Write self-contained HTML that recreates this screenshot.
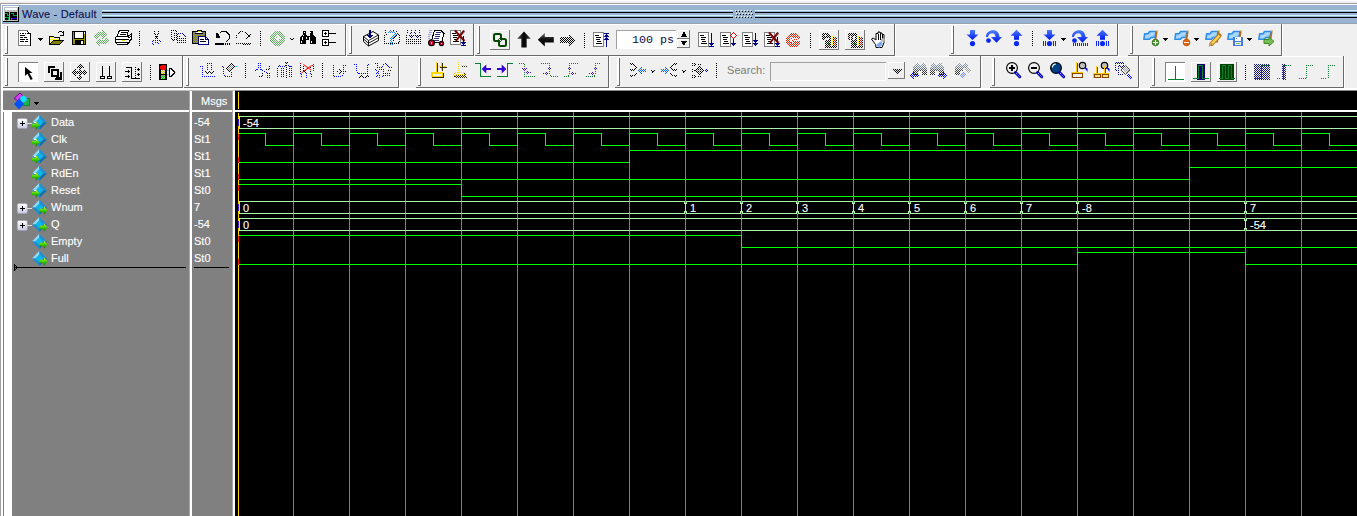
<!DOCTYPE html>
<html><head><meta charset="utf-8"><title>Wave - Default</title>
<style>
html,body{margin:0;padding:0}
body{width:1357px;height:516px;overflow:hidden;background:#f0f0f0;position:relative;font-family:"Liberation Sans",sans-serif}
#r{position:absolute;left:0;top:0;width:1357px;height:516px;overflow:hidden}
#r>div{position:absolute}
.t{font-size:11px;line-height:13px;white-space:nowrap}
.w{color:#fff;-webkit-text-stroke:.12px #fff}
.m{font-family:"Liberation Mono",monospace;white-space:pre}
svg{position:absolute;left:0;top:0}
</style></head>
<body><div id="r">
<div style="left:0px;top:0px;width:1357px;height:3px;background:linear-gradient(#fff,#e9e9e9);"></div>
<div style="left:0px;top:3px;width:1357px;height:1px;background:#a0a0a0;"></div>
<div style="left:0px;top:4px;width:1px;height:512px;background:#a0a0a0;"></div>
<div style="left:1px;top:4px;width:1356px;height:1px;background:#fff;"></div>
<div style="left:1px;top:5px;width:2px;height:511px;background:#fff;"></div>
<div style="left:2px;top:5px;width:1355px;height:18px;background:#99b4d1;"></div>
<div style="left:2px;top:23px;width:1355px;height:1px;background:#98a2ae;"></div>
<div style="left:2px;top:24px;width:1281px;height:1px;background:#fff;"></div>
<div style="left:102px;top:10px;width:631px;height:1px;background:#d0f4ff;"></div>
<div style="left:102px;top:12px;width:631px;height:1px;background:#000;"></div>
<div style="left:755px;top:10px;width:602px;height:1px;background:#d0f4ff;"></div>
<div style="left:755px;top:12px;width:602px;height:1px;background:#000;"></div>
<div style="left:102px;top:15px;width:631px;height:1px;background:#d0f4ff;"></div>
<div style="left:102px;top:17px;width:631px;height:1px;background:#000;"></div>
<div style="left:755px;top:15px;width:602px;height:1px;background:#d0f4ff;"></div>
<div style="left:755px;top:17px;width:602px;height:1px;background:#000;"></div>
<div style="left:2px;top:56px;width:1341px;height:1px;background:#fff;"></div>
<div style="left:2px;top:88px;width:1355px;height:1px;background:#fff;"></div>
<div style="left:2px;top:89px;width:1355px;height:1px;background:#fff;"></div>
<div style="left:3px;top:90px;width:232px;height:1px;background:#c0c0c0;"></div>
<div style="left:235px;top:90px;width:1122px;height:1px;background:#8a8a8a;"></div>
<div style="left:3px;top:91px;width:186px;height:425px;background:#808080;"></div>
<div style="left:189px;top:91px;width:1px;height:425px;background:#a8a8a8;"></div>
<div style="left:190px;top:91px;width:2px;height:425px;background:#fff;"></div>
<div style="left:192px;top:91px;width:40px;height:425px;background:#808080;"></div>
<div style="left:232px;top:91px;width:1px;height:425px;background:#a8a8a8;"></div>
<div style="left:233px;top:91px;width:2px;height:425px;background:#fff;"></div>
<div style="left:235px;top:91px;width:1122px;height:425px;background:#000;"></div>
<div style="left:3px;top:110px;width:186px;height:2px;background:#fff;"></div>
<div style="left:192px;top:110px;width:40px;height:2px;background:#fff;"></div>
<div style="left:235px;top:110px;width:1122px;height:2px;background:#fff;"></div>
<div style="left:4px;top:110px;width:8px;height:406px;background:#fff;"></div>
<svg width="1357" height="516" viewBox="0 0 1357 516" shape-rendering="crispEdges">
<rect x="736" y="11" width="1" height="1" fill="#000" />
<rect x="735" y="10" width="1" height="1" fill="#fff" />
<rect x="739" y="11" width="1" height="1" fill="#000" />
<rect x="738" y="10" width="1" height="1" fill="#fff" />
<rect x="742" y="11" width="1" height="1" fill="#000" />
<rect x="741" y="10" width="1" height="1" fill="#fff" />
<rect x="745" y="11" width="1" height="1" fill="#000" />
<rect x="744" y="10" width="1" height="1" fill="#fff" />
<rect x="748" y="11" width="1" height="1" fill="#000" />
<rect x="747" y="10" width="1" height="1" fill="#fff" />
<rect x="751" y="11" width="1" height="1" fill="#000" />
<rect x="750" y="10" width="1" height="1" fill="#fff" />
<rect x="737" y="14" width="1" height="1" fill="#000" />
<rect x="736" y="13" width="1" height="1" fill="#fff" />
<rect x="740" y="14" width="1" height="1" fill="#000" />
<rect x="739" y="13" width="1" height="1" fill="#fff" />
<rect x="743" y="14" width="1" height="1" fill="#000" />
<rect x="742" y="13" width="1" height="1" fill="#fff" />
<rect x="746" y="14" width="1" height="1" fill="#000" />
<rect x="745" y="13" width="1" height="1" fill="#fff" />
<rect x="749" y="14" width="1" height="1" fill="#000" />
<rect x="748" y="13" width="1" height="1" fill="#fff" />
<rect x="752" y="14" width="1" height="1" fill="#000" />
<rect x="751" y="13" width="1" height="1" fill="#fff" />
<rect x="736" y="17" width="1" height="1" fill="#000" />
<rect x="735" y="16" width="1" height="1" fill="#fff" />
<rect x="739" y="17" width="1" height="1" fill="#000" />
<rect x="738" y="16" width="1" height="1" fill="#fff" />
<rect x="742" y="17" width="1" height="1" fill="#000" />
<rect x="741" y="16" width="1" height="1" fill="#fff" />
<rect x="745" y="17" width="1" height="1" fill="#000" />
<rect x="744" y="16" width="1" height="1" fill="#fff" />
<rect x="748" y="17" width="1" height="1" fill="#000" />
<rect x="747" y="16" width="1" height="1" fill="#fff" />
<rect x="751" y="17" width="1" height="1" fill="#000" />
<rect x="750" y="16" width="1" height="1" fill="#fff" />
<rect x="7" y="26" width="1" height="28" fill="#696969" />
<rect x="5" y="53" width="3" height="1" fill="#696969" />
<rect x="5" y="26" width="2" height="27" fill="#fff" />
<rect x="3" y="55" width="343" height="1" fill="#696969" />
<rect x="345" y="24" width="1" height="32" fill="#696969" />
<rect x="346" y="24" width="1" height="32" fill="#fff" />
<rect x="351" y="26" width="1" height="28" fill="#696969" />
<rect x="349" y="53" width="3" height="1" fill="#696969" />
<rect x="349" y="26" width="2" height="27" fill="#fff" />
<rect x="347" y="55" width="127" height="1" fill="#696969" />
<rect x="473" y="24" width="1" height="32" fill="#696969" />
<rect x="474" y="24" width="1" height="32" fill="#fff" />
<rect x="479" y="26" width="1" height="28" fill="#696969" />
<rect x="477" y="53" width="3" height="1" fill="#696969" />
<rect x="477" y="26" width="2" height="27" fill="#fff" />
<rect x="475" y="55" width="420" height="1" fill="#696969" />
<rect x="894" y="24" width="1" height="32" fill="#696969" />
<rect x="895" y="24" width="1" height="32" fill="#fff" />
<rect x="953" y="26" width="1" height="28" fill="#696969" />
<rect x="951" y="53" width="3" height="1" fill="#696969" />
<rect x="951" y="26" width="2" height="27" fill="#fff" />
<rect x="949" y="55" width="169" height="1" fill="#696969" />
<rect x="1117" y="24" width="1" height="32" fill="#696969" />
<rect x="1118" y="24" width="1" height="32" fill="#fff" />
<rect x="1132" y="26" width="1" height="28" fill="#696969" />
<rect x="1130" y="53" width="3" height="1" fill="#696969" />
<rect x="1130" y="26" width="2" height="27" fill="#fff" />
<rect x="1128" y="55" width="154" height="1" fill="#696969" />
<rect x="1281" y="24" width="1" height="32" fill="#696969" />
<rect x="1282" y="24" width="1" height="32" fill="#fff" />
<rect x="7" y="58" width="1" height="28" fill="#696969" />
<rect x="5" y="85" width="3" height="1" fill="#696969" />
<rect x="5" y="58" width="2" height="27" fill="#fff" />
<rect x="3" y="87" width="180" height="1" fill="#696969" />
<rect x="182" y="56" width="1" height="32" fill="#696969" />
<rect x="183" y="56" width="1" height="32" fill="#fff" />
<rect x="188" y="58" width="1" height="28" fill="#696969" />
<rect x="186" y="85" width="3" height="1" fill="#696969" />
<rect x="186" y="58" width="2" height="27" fill="#fff" />
<rect x="184" y="87" width="215" height="1" fill="#696969" />
<rect x="398" y="56" width="1" height="32" fill="#696969" />
<rect x="399" y="56" width="1" height="32" fill="#fff" />
<rect x="420" y="58" width="1" height="28" fill="#696969" />
<rect x="418" y="85" width="3" height="1" fill="#696969" />
<rect x="418" y="58" width="2" height="27" fill="#fff" />
<rect x="416" y="87" width="193" height="1" fill="#696969" />
<rect x="608" y="56" width="1" height="32" fill="#696969" />
<rect x="609" y="56" width="1" height="32" fill="#fff" />
<rect x="619" y="58" width="1" height="28" fill="#696969" />
<rect x="617" y="85" width="3" height="1" fill="#696969" />
<rect x="617" y="58" width="2" height="27" fill="#fff" />
<rect x="615" y="87" width="366" height="1" fill="#696969" />
<rect x="980" y="56" width="1" height="32" fill="#696969" />
<rect x="981" y="56" width="1" height="32" fill="#fff" />
<rect x="994" y="58" width="1" height="28" fill="#696969" />
<rect x="992" y="85" width="3" height="1" fill="#696969" />
<rect x="992" y="58" width="2" height="27" fill="#fff" />
<rect x="990" y="87" width="149" height="1" fill="#696969" />
<rect x="1138" y="56" width="1" height="32" fill="#696969" />
<rect x="1139" y="56" width="1" height="32" fill="#fff" />
<rect x="1154" y="58" width="1" height="28" fill="#696969" />
<rect x="1152" y="85" width="3" height="1" fill="#696969" />
<rect x="1152" y="58" width="2" height="27" fill="#fff" />
<rect x="1150" y="87" width="194" height="1" fill="#696969" />
<rect x="1343" y="56" width="1" height="32" fill="#696969" />
<rect x="1344" y="56" width="1" height="32" fill="#fff" />
<rect x="490" y="30" width="20" height="1" fill="#fff" />
<rect x="490" y="30" width="1" height="20" fill="#fff" />
<rect x="490" y="49" width="20" height="1" fill="#787878" />
<rect x="509" y="30" width="1" height="20" fill="#787878" />
<rect x="819" y="30" width="20" height="1" fill="#fff" />
<rect x="819" y="30" width="1" height="20" fill="#fff" />
<rect x="819" y="49" width="20" height="1" fill="#787878" />
<rect x="838" y="30" width="1" height="20" fill="#787878" />
<rect x="845" y="30" width="20" height="1" fill="#fff" />
<rect x="845" y="30" width="1" height="20" fill="#fff" />
<rect x="845" y="49" width="20" height="1" fill="#787878" />
<rect x="864" y="30" width="1" height="20" fill="#787878" />
<rect x="18" y="62" width="20" height="20" fill="#fff" />
<rect x="18" y="62" width="20" height="1" fill="#808080" />
<rect x="18" y="62" width="1" height="20" fill="#808080" />
<rect x="44" y="62" width="20" height="1" fill="#fff" />
<rect x="44" y="62" width="1" height="20" fill="#fff" />
<rect x="44" y="81" width="20" height="1" fill="#787878" />
<rect x="63" y="62" width="1" height="20" fill="#787878" />
<rect x="70" y="62" width="20" height="1" fill="#fff" />
<rect x="70" y="62" width="1" height="20" fill="#fff" />
<rect x="70" y="81" width="20" height="1" fill="#787878" />
<rect x="89" y="62" width="1" height="20" fill="#787878" />
<rect x="96" y="62" width="20" height="1" fill="#fff" />
<rect x="96" y="62" width="1" height="20" fill="#fff" />
<rect x="96" y="81" width="20" height="1" fill="#787878" />
<rect x="115" y="62" width="1" height="20" fill="#787878" />
<rect x="122" y="62" width="20" height="1" fill="#fff" />
<rect x="122" y="62" width="1" height="20" fill="#fff" />
<rect x="122" y="81" width="20" height="1" fill="#787878" />
<rect x="141" y="62" width="1" height="20" fill="#787878" />
<rect x="1165" y="62" width="20" height="20" fill="#fff" />
<rect x="1165" y="62" width="20" height="1" fill="#808080" />
<rect x="1165" y="62" width="1" height="20" fill="#808080" />
<rect x="1191" y="62" width="20" height="1" fill="#fff" />
<rect x="1191" y="62" width="1" height="20" fill="#fff" />
<rect x="1191" y="81" width="20" height="1" fill="#787878" />
<rect x="1210" y="62" width="1" height="20" fill="#787878" />
<rect x="1217" y="62" width="20" height="1" fill="#fff" />
<rect x="1217" y="62" width="1" height="20" fill="#fff" />
<rect x="1217" y="81" width="20" height="1" fill="#787878" />
<rect x="1236" y="62" width="1" height="20" fill="#787878" />
<path d="M139.5 31V46" stroke="#000" stroke-width="1" stroke-dasharray="1 1" fill="none"/>
<path d="M260.5 31V46" stroke="#000" stroke-width="1" stroke-dasharray="1 1" fill="none"/>
<path d="M584.5 33V48" stroke="#000" stroke-width="1" stroke-dasharray="1 1" fill="none"/>
<path d="M810.5 33V48" stroke="#000" stroke-width="1" stroke-dasharray="1 1" fill="none"/>
<path d="M1032.5 31V46" stroke="#000" stroke-width="1" stroke-dasharray="1 1" fill="none"/>
<path d="M150.5 65V80" stroke="#000" stroke-width="1" stroke-dasharray="1 1" fill="none"/>
<path d="M245.5 63V78" stroke="#000" stroke-width="1" stroke-dasharray="1 1" fill="none"/>
<path d="M322.5 63V78" stroke="#000" stroke-width="1" stroke-dasharray="1 1" fill="none"/>
<path d="M716.5 63V78" stroke="#000" stroke-width="1" stroke-dasharray="1 1" fill="none"/>
<path d="M1245.5 65V80" stroke="#000" stroke-width="1" stroke-dasharray="1 1" fill="none"/>
<rect x="616" y="30" width="60" height="19" fill="#fff" />
<rect x="616" y="30" width="60" height="1" fill="#a0a0a0" />
<rect x="616" y="30" width="1" height="19" fill="#a0a0a0" />
<rect x="677" y="30" width="13" height="1" fill="#fff" />
<rect x="677" y="30" width="1" height="9" fill="#fff" />
<rect x="677" y="38" width="13" height="1" fill="#787878" />
<rect x="689" y="30" width="1" height="9" fill="#787878" />
<rect x="677" y="39" width="13" height="1" fill="#fff" />
<rect x="677" y="39" width="1" height="9" fill="#fff" />
<rect x="677" y="47" width="13" height="1" fill="#787878" />
<rect x="689" y="39" width="1" height="9" fill="#787878" />
<path d="M681 36.500h6l-3-5zM681 41h6l-3 5z" fill="#000"/>
<rect x="770" y="62" width="116" height="1" fill="#a0a0a0" />
<rect x="770" y="62" width="1" height="19" fill="#a0a0a0" />
<rect x="771" y="80" width="115" height="1" fill="#fff" />
<rect x="885" y="63" width="1" height="18" fill="#fff" />
<rect x="888" y="62" width="17" height="1" fill="#fff" />
<rect x="888" y="62" width="1" height="17" fill="#fff" />
<rect x="888" y="78" width="17" height="1" fill="#787878" />
<rect x="904" y="62" width="1" height="17" fill="#787878" />
<rect x="14" y="267" width="172" height="1" fill="#000" />
<rect x="194" y="267" width="35" height="1" fill="#000" />
<path d="M14.5 264.5v6l3-3z" fill="none" stroke="#000"/>
<rect x="293" y="112" width="1" height="404" fill="#7f7f7f" />
<rect x="349" y="112" width="1" height="404" fill="#7f7f7f" />
<rect x="405" y="112" width="1" height="404" fill="#7f7f7f" />
<rect x="461" y="112" width="1" height="404" fill="#7f7f7f" />
<rect x="517" y="112" width="1" height="404" fill="#7f7f7f" />
<rect x="573" y="112" width="1" height="404" fill="#7f7f7f" />
<rect x="629" y="112" width="1" height="404" fill="#7f7f7f" />
<rect x="685" y="112" width="1" height="404" fill="#7f7f7f" />
<rect x="741" y="112" width="1" height="404" fill="#7f7f7f" />
<rect x="797" y="112" width="1" height="404" fill="#7f7f7f" />
<rect x="853" y="112" width="1" height="404" fill="#7f7f7f" />
<rect x="909" y="112" width="1" height="404" fill="#7f7f7f" />
<rect x="965" y="112" width="1" height="404" fill="#7f7f7f" />
<rect x="1021" y="112" width="1" height="404" fill="#7f7f7f" />
<rect x="1077" y="112" width="1" height="404" fill="#7f7f7f" />
<rect x="1133" y="112" width="1" height="404" fill="#7f7f7f" />
<rect x="1189" y="112" width="1" height="404" fill="#7f7f7f" />
<rect x="1245" y="112" width="1" height="404" fill="#7f7f7f" />
<rect x="1301" y="112" width="1" height="404" fill="#7f7f7f" />
<path d="M239 133.5H265.5V145.5H293.5V133.5H321.5V145.5H349.5V133.5H377.5V145.5H405.5V133.5H433.5V145.5H461.5V133.5H489.5V145.5H517.5V133.5H545.5V145.5H573.5V133.5H601.5V145.5H629.5V133.5H657.5V145.5H685.5V133.5H713.5V145.5H741.5V133.5H769.5V145.5H797.5V133.5H825.5V145.5H853.5V133.5H881.5V145.5H909.5V133.5H937.5V145.5H965.5V133.5H993.5V145.5H1021.5V133.5H1049.5V145.5H1077.5V133.5H1105.5V145.5H1133.5V133.5H1161.5V145.5H1189.5V133.5H1217.5V145.5H1245.5V133.5H1273.5V145.5H1301.5V133.5H1329.5V145.5H1357" stroke="#00ff00" fill="none" stroke-width="1"/>
<path d="M239 162.5H629.5V150.5H1357" stroke="#00ff00" fill="none" stroke-width="1"/>
<path d="M239 179.5H1189.5V167.5H1357" stroke="#00ff00" fill="none" stroke-width="1"/>
<path d="M239 184.5H461.5V196.5H1357" stroke="#00ff00" fill="none" stroke-width="1"/>
<path d="M239 235.5H741.5V247.5H1357" stroke="#00ff00" fill="none" stroke-width="1"/>
<path d="M239 264.5H1077.5V252.5H1245.5V264.5H1357" stroke="#00ff00" fill="none" stroke-width="1"/>
<rect x="239" y="116" width="1" height="13" fill="#acf4ac" />
<rect x="239" y="116" width="1119" height="1" fill="#acf4ac" />
<rect x="239" y="128" width="1119" height="1" fill="#acf4ac" />
<rect x="238" y="119" width="1" height="7" fill="#3c1ec8" />
<rect x="239" y="201" width="1" height="13" fill="#acf4ac" />
<rect x="239" y="201" width="446" height="1" fill="#acf4ac" />
<rect x="239" y="213" width="446" height="1" fill="#acf4ac" />
<rect x="684" y="202" width="1" height="2" fill="#acf4ac" />
<rect x="684" y="211" width="1" height="2" fill="#acf4ac" />
<rect x="686" y="202" width="1" height="2" fill="#acf4ac" />
<rect x="686" y="211" width="1" height="2" fill="#acf4ac" />
<rect x="685" y="203" width="1" height="9" fill="#acf4ac" />
<rect x="686" y="201" width="55" height="1" fill="#acf4ac" />
<rect x="686" y="213" width="55" height="1" fill="#acf4ac" />
<rect x="740" y="202" width="1" height="2" fill="#acf4ac" />
<rect x="740" y="211" width="1" height="2" fill="#acf4ac" />
<rect x="742" y="202" width="1" height="2" fill="#acf4ac" />
<rect x="742" y="211" width="1" height="2" fill="#acf4ac" />
<rect x="741" y="203" width="1" height="9" fill="#acf4ac" />
<rect x="742" y="201" width="55" height="1" fill="#acf4ac" />
<rect x="742" y="213" width="55" height="1" fill="#acf4ac" />
<rect x="796" y="202" width="1" height="2" fill="#acf4ac" />
<rect x="796" y="211" width="1" height="2" fill="#acf4ac" />
<rect x="798" y="202" width="1" height="2" fill="#acf4ac" />
<rect x="798" y="211" width="1" height="2" fill="#acf4ac" />
<rect x="797" y="203" width="1" height="9" fill="#acf4ac" />
<rect x="798" y="201" width="55" height="1" fill="#acf4ac" />
<rect x="798" y="213" width="55" height="1" fill="#acf4ac" />
<rect x="852" y="202" width="1" height="2" fill="#acf4ac" />
<rect x="852" y="211" width="1" height="2" fill="#acf4ac" />
<rect x="854" y="202" width="1" height="2" fill="#acf4ac" />
<rect x="854" y="211" width="1" height="2" fill="#acf4ac" />
<rect x="853" y="203" width="1" height="9" fill="#acf4ac" />
<rect x="854" y="201" width="55" height="1" fill="#acf4ac" />
<rect x="854" y="213" width="55" height="1" fill="#acf4ac" />
<rect x="908" y="202" width="1" height="2" fill="#acf4ac" />
<rect x="908" y="211" width="1" height="2" fill="#acf4ac" />
<rect x="910" y="202" width="1" height="2" fill="#acf4ac" />
<rect x="910" y="211" width="1" height="2" fill="#acf4ac" />
<rect x="909" y="203" width="1" height="9" fill="#acf4ac" />
<rect x="910" y="201" width="55" height="1" fill="#acf4ac" />
<rect x="910" y="213" width="55" height="1" fill="#acf4ac" />
<rect x="964" y="202" width="1" height="2" fill="#acf4ac" />
<rect x="964" y="211" width="1" height="2" fill="#acf4ac" />
<rect x="966" y="202" width="1" height="2" fill="#acf4ac" />
<rect x="966" y="211" width="1" height="2" fill="#acf4ac" />
<rect x="965" y="203" width="1" height="9" fill="#acf4ac" />
<rect x="966" y="201" width="55" height="1" fill="#acf4ac" />
<rect x="966" y="213" width="55" height="1" fill="#acf4ac" />
<rect x="1020" y="202" width="1" height="2" fill="#acf4ac" />
<rect x="1020" y="211" width="1" height="2" fill="#acf4ac" />
<rect x="1022" y="202" width="1" height="2" fill="#acf4ac" />
<rect x="1022" y="211" width="1" height="2" fill="#acf4ac" />
<rect x="1021" y="203" width="1" height="9" fill="#acf4ac" />
<rect x="1022" y="201" width="55" height="1" fill="#acf4ac" />
<rect x="1022" y="213" width="55" height="1" fill="#acf4ac" />
<rect x="1076" y="202" width="1" height="2" fill="#acf4ac" />
<rect x="1076" y="211" width="1" height="2" fill="#acf4ac" />
<rect x="1078" y="202" width="1" height="2" fill="#acf4ac" />
<rect x="1078" y="211" width="1" height="2" fill="#acf4ac" />
<rect x="1077" y="203" width="1" height="9" fill="#acf4ac" />
<rect x="1078" y="201" width="167" height="1" fill="#acf4ac" />
<rect x="1078" y="213" width="167" height="1" fill="#acf4ac" />
<rect x="1244" y="202" width="1" height="2" fill="#acf4ac" />
<rect x="1244" y="211" width="1" height="2" fill="#acf4ac" />
<rect x="1246" y="202" width="1" height="2" fill="#acf4ac" />
<rect x="1246" y="211" width="1" height="2" fill="#acf4ac" />
<rect x="1245" y="203" width="1" height="9" fill="#acf4ac" />
<rect x="1246" y="201" width="112" height="1" fill="#acf4ac" />
<rect x="1246" y="213" width="112" height="1" fill="#acf4ac" />
<rect x="238" y="204" width="1" height="7" fill="#3c1ec8" />
<rect x="239" y="218" width="1" height="13" fill="#acf4ac" />
<rect x="239" y="218" width="1006" height="1" fill="#acf4ac" />
<rect x="239" y="230" width="1006" height="1" fill="#acf4ac" />
<rect x="1244" y="219" width="1" height="2" fill="#acf4ac" />
<rect x="1244" y="228" width="1" height="2" fill="#acf4ac" />
<rect x="1246" y="219" width="1" height="2" fill="#acf4ac" />
<rect x="1246" y="228" width="1" height="2" fill="#acf4ac" />
<rect x="1245" y="220" width="1" height="9" fill="#acf4ac" />
<rect x="1246" y="218" width="112" height="1" fill="#acf4ac" />
<rect x="1246" y="230" width="112" height="1" fill="#acf4ac" />
<rect x="238" y="221" width="1" height="7" fill="#3c1ec8" />
<rect x="238" y="92" width="1" height="17" fill="#ffd000" />
<rect x="238" y="113" width="1" height="403" fill="#ffd000" />
<rect x="238" y="134" width="1" height="6" fill="#ff2000" />
<rect x="238" y="157" width="1" height="6" fill="#ff2000" />
<rect x="238" y="174" width="1" height="6" fill="#ff2000" />
<rect x="238" y="185" width="1" height="6" fill="#ff2000" />
<rect x="238" y="236" width="1" height="6" fill="#ff2000" />
<rect x="238" y="259" width="1" height="6" fill="#ff2000" />
<rect x="238" y="119" width="1" height="7" fill="#3c1ec8" />
<rect x="238" y="204" width="1" height="7" fill="#3c1ec8" />
<rect x="238" y="221" width="1" height="7" fill="#3c1ec8" />
<defs>
<pattern id="ck" width="2" height="2" patternUnits="userSpaceOnUse"><rect width="2" height="2" fill="#000"/><rect x="0" y="0" width="1" height="1" fill="#fff"/><rect x="1" y="1" width="1" height="1" fill="#fff"/></pattern>
<pattern id="ck2" width="2" height="2" patternUnits="userSpaceOnUse"><rect width="2" height="2" fill="#000"/><rect x="1" y="0" width="1" height="1" fill="#fff"/><rect x="0" y="1" width="1" height="1" fill="#fff"/></pattern>
<pattern id="q4" width="2" height="2" patternUnits="userSpaceOnUse"><rect width="2" height="2" fill="#000"/><rect x="0" y="0" width="1" height="1" fill="#fff"/></pattern>
<mask id="m50" maskUnits="userSpaceOnUse" x="0" y="0" width="1357" height="516"><rect width="1357" height="516" fill="url(#ck)"/></mask>
<mask id="m50b" maskUnits="userSpaceOnUse" x="0" y="0" width="1357" height="516"><rect width="1357" height="516" fill="url(#ck2)"/></mask>
<mask id="m25" maskUnits="userSpaceOnUse" x="0" y="0" width="1357" height="516"><rect width="1357" height="516" fill="url(#q4)"/></mask>
<linearGradient id="gb" x1="0" y1="0" x2="0" y2="1"><stop offset="0" stop-color="#4a7dff"/><stop offset="1" stop-color="#0018e8"/></linearGradient>
<linearGradient id="gk" x1="0" y1="0" x2="1" y2="0"><stop offset="0" stop-color="#555"/><stop offset=".5" stop-color="#000"/><stop offset="1" stop-color="#444"/></linearGradient>
<linearGradient id="gk2" x1="0" y1="0" x2="0" y2="1"><stop offset="0" stop-color="#666"/><stop offset=".45" stop-color="#111"/><stop offset="1" stop-color="#000"/></linearGradient>
<linearGradient id="gfl" x1="0" y1="0" x2="1" y2="1"><stop offset="0" stop-color="#62b0f4"/><stop offset=".5" stop-color="#b4dcfc"/><stop offset="1" stop-color="#58a8f0"/></linearGradient>
<linearGradient id="ggr" x1="0" y1="0" x2="0" y2="1"><stop offset="0" stop-color="#e8ff20"/><stop offset=".5" stop-color="#40d000"/><stop offset="1" stop-color="#0a6000"/></linearGradient>
<linearGradient id="gbn" x1="0" y1="0" x2="0" y2="1"><stop offset="0" stop-color="#9aaabc"/><stop offset=".45" stop-color="#6c7888"/><stop offset=".65" stop-color="#3c3c3c"/><stop offset="1" stop-color="#2a2a2a"/></linearGradient>
<linearGradient id="gpl" x1="0" y1="0" x2="0" y2="1"><stop offset="0" stop-color="#fff"/><stop offset="1" stop-color="#c8c8e0"/></linearGradient>
</defs>
<path d="M18 30h10l3 3v13h-13z" fill="#fff" />
<rect x="18" y="30" width="1" height="16" fill="#808080"/>
<rect x="18" y="30" width="10" height="1" fill="#808080"/>
<rect x="18" y="45" width="13" height="1" fill="#808080"/>
<rect x="30" y="33" width="1" height="13" fill="#000"/>
<rect x="27" y="33" width="4" height="1" fill="#000"/>
<path d="M27 31h1v1h-1zM28 32h1v1h-1zM29 33h1v1h-1z" fill="#000"/>
<rect x="20" y="33" width="1" height="1" fill="#000"/>
<rect x="22" y="33" width="2" height="1" fill="#000"/>
<rect x="25" y="33" width="1" height="1" fill="#000"/>
<rect x="20" y="35" width="5" height="1" fill="#000"/>
<rect x="20" y="37" width="3" height="1" fill="#000"/>
<rect x="24" y="37" width="3" height="1" fill="#000"/>
<rect x="20" y="39" width="5" height="1" fill="#000"/>
<rect x="26" y="39" width="2" height="1" fill="#000"/>
<rect x="20" y="41" width="4" height="1" fill="#000"/>
<rect x="25" y="41" width="3" height="1" fill="#000"/>
<rect x="38" y="38" width="5" height="1" fill="#000"/>
<rect x="39" y="39" width="3" height="1" fill="#000"/>
<rect x="40" y="40" width="1" height="1" fill="#000"/>
<path d="M49.5 36.5v8h10l4-4h-3.5v-3h-6l-1-1z" fill="#fff" />
<path d="M50 37h9v3h-5l-4 4z" fill="#ffff00" />
<path d="M50 37h9v3h-5l-4 4z" fill="#fff" mask="url(#m50)"/>
<path d="M54 40h9l-4 4h-9z" fill="#808000" />
<path d="M49.5 44.5v-8.5h3.5l1 1h5v3M53.5 40.5h10l-4 4h-10l4-4" fill="none" stroke="#000" stroke-width="1" />
<path d="M57.5 33.5l2-2h2l2.5 2.5M63.5 31v4h-3.5" fill="none" stroke="#000" stroke-width="1" />
<rect x="72" y="31" width="14" height="14" fill="#000"/>
<rect x="73" y="32" width="12" height="12" fill="#9a9a00"/>
<rect x="74" y="31" width="10" height="8" fill="#000"/>
<rect x="75" y="32" width="8" height="6" fill="#fff"/>
<rect x="75" y="40" width="9" height="5" fill="#000"/>
<rect x="81" y="41" width="2" height="3" fill="#fff"/>
<rect x="84" y="32" width="1" height="2" fill="#fff"/>
<g mask="url(#m50)">
<path d="M93 36l4-4h5v-2l5 4-5 5v-3h-3l-3 3z" fill="#62b462" />
<path d="M109 40l-4 4h-5v2l-5-4 5-5v3h3l3-3z" fill="#62b462" />
</g>
<path d="M119.5 30.5h9l-1.5 5.5h-10z" fill="#fff" stroke="#000" stroke-width="1" />
<rect x="121" y="32" width="6" height="1" fill="#000"/>
<rect x="120" y="34" width="6" height="1" fill="#000"/>
<path d="M115.5 37.5l1.5-1.5h10.5l1.5 1.5v5l-1.5 1.5h-10.5l-1.5-1.5z" fill="#fff" stroke="#000" stroke-width="1" />
<path d="M128.5 36l2.5-2v6l-2.5 3" fill="#fff" stroke="#000" stroke-width="1" />
<rect x="116" y="39" width="13" height="1" fill="#000"/>
<rect x="116" y="42" width="13" height="1" fill="#000"/>
<rect x="122" y="40" width="3" height="1" fill="#e8e000"/>
<path d="M129 37h1v1h-1zM130 36h1v1h-1zM129 40h1v1h-1zM130 39h1v1h-1z" fill="#000"/>
<path d="M154 31h1v1h-1zM158 31h1v1h-1zM154 33h1v1h-1zM158 33h1v1h-1zM155 34h1v1h-1zM157 34h1v1h-1zM156 36h1v1h-1zM155 36h1v1h-1zM157 36h1v1h-1zM156 37h1v1h-1z" fill="#000"/>
<path d="M155 38h1v1h-1zM157 38h1v1h-1zM153 40h1v1h-1zM155 40h1v1h-1zM157 40h1v1h-1zM152 41h1v1h-1zM160 41h1v1h-1zM155 42h1v1h-1zM157 42h1v1h-1zM152 43h1v1h-1zM158 43h1v1h-1zM153 44h1v1h-1zM159 40h1v1h-1z" fill="#0000ff"/>
<path d="M171 30h1v1h-1zM173 30h1v1h-1zM175 30h1v1h-1zM176 31h1v1h-1zM171 32h1v1h-1zM171 34h1v1h-1zM171 36h1v1h-1zM171 38h1v1h-1zM172 39h1v1h-1zM173 40h1v1h-1zM174 33h1v1h-1zM174 35h1v1h-1zM174 37h1v1h-1zM174 39h1v1h-1zM176 33h1v1h-1zM176 35h1v1h-1zM176 37h1v1h-1zM176 39h1v1h-1zM179 36h1v1h-1zM179 38h1v1h-1zM181 38h1v1h-1zM183 38h1v1h-1zM179 40h1v1h-1zM181 40h1v1h-1zM183 40h1v1h-1z" fill="#000"/>
<path d="M178 33h1v1h-1zM180 33h1v1h-1zM182 33h1v1h-1zM183 34h1v1h-1zM184 35h1v1h-1zM185 36h1v1h-1zM177 34h1v1h-1zM177 36h1v1h-1zM177 38h1v1h-1zM177 40h1v1h-1zM177 42h1v1h-1zM185 38h1v1h-1zM185 40h1v1h-1zM185 42h1v1h-1zM179 42h1v1h-1zM181 42h1v1h-1zM183 42h1v1h-1z" fill="#000090"/>
<rect x="192" y="31" width="14" height="13" fill="#000"/>
<rect x="193" y="32" width="12" height="11" fill="#808000"/>
<rect x="193" y="32" width="12" height="11" fill="#909090" mask="url(#m50)"/>
<path d="M195 33.5l1.5-1.5h5l1.5 1.5z" fill="#fff" />
<rect x="195" y="33" width="8" height="1" fill="#000"/>
<rect x="198" y="31" width="3" height="1" fill="#e8e000"/>
<rect x="199" y="30" width="1" height="1" fill="#000"/>
<rect x="197" y="30" width="5" height="1" fill="#000"/>
<path d="M198.5 36.5h7l2.5 2.5v5h-9.5z" fill="#fff" stroke="#000080" stroke-width="1" />
<path d="M205.5 36.5v2.5h2.5" fill="none" stroke="#000080" stroke-width="1" />
<rect x="200" y="39" width="4" height="1" fill="#000"/>
<rect x="200" y="41" width="6" height="1" fill="#000"/>
<path d="M216 33v5h4v-1z" fill="#000" />
<path d="M217 33h1v1h-1zM218 34h1v1h-1z" fill="#000"/>
<path d="M219.5 33.5l2-2h4.5l3.5 3.5v3.500l-3.500 3.500" fill="none" stroke="#000" stroke-width="1" />
<rect x="215" y="43" width="9" height="2" fill="#000"/>
<rect x="225" y="43" width="1" height="2" fill="#000"/>
<rect x="227" y="43" width="1" height="2" fill="#000"/>
<rect x="229" y="43" width="1" height="2" fill="#000"/>
<path d="M236 35h1v1h-1zM236 37h1v1h-1zM238 33h1v1h-1zM239 32h1v1h-1zM240 31h1v1h-1zM242 31h1v1h-1zM245 32h1v1h-1zM246 33h1v1h-1zM247 34h1v1h-1zM248 35h1v1h-1zM249 36h1v1h-1zM250 34h1v1h-1zM249 35h1v1h-1zM247 37h1v1h-1zM246 38h1v1h-1zM248 36h1v1h-1zM236 43h1v1h-1zM238 43h1v1h-1zM240 43h1v1h-1zM242 43h1v1h-1zM243 44h1v1h-1zM244 43h1v1h-1zM245 44h1v1h-1zM246 43h1v1h-1zM247 44h1v1h-1zM248 43h1v1h-1zM249 44h1v1h-1zM250 43h1v1h-1z" fill="#000"/>
<g mask="url(#m50)">
<circle cx="277.5" cy="38.500" r="7.5" fill="#62b462"/>
</g>
<path d="M277.5 34.5l3.5 3.5-3.500 3.500-3.500-3.500z" fill="#f4f4f4" />
<path d="M276 37h1v1h-1zM279 39h1v1h-1z" fill="#62b462"/>
<path d="M290 38h1v1h-1zM291 39h1v1h-1zM292 39h1v1h-1zM293 38h1v1h-1z" fill="#000"/>
<path d="M303 31h3v3l1 2h2l1-2v-3h3v3l3 4v6h-6v-4h-4v4h-6v-6l3-4z" fill="#000" />
<path d="M304 32h1v1h-1zM310 32h1v1h-1zM303 35h1v1h-1zM309 35h1v1h-1zM302 37h1v1h-1zM302 38h1v1h-1zM302 39h1v1h-1zM306 37h1v1h-1zM306 38h1v1h-1zM309 37h1v1h-1zM309 38h1v1h-1zM309 39h1v1h-1zM301 41h1v1h-1zM301 42h1v1h-1zM311 41h1v1h-1zM311 42h1v1h-1z" fill="#fff"/>
<rect x="322" y="30" width="7" height="7" fill="#000"/>
<rect x="323" y="31" width="5" height="5" fill="#fff"/>
<rect x="324" y="33" width="3" height="1" fill="#000"/>
<rect x="325" y="32" width="1" height="3" fill="#000"/>
<rect x="329" y="33" width="7" height="1" fill="#000"/>
<rect x="322" y="39" width="7" height="7" fill="#000"/>
<rect x="323" y="40" width="5" height="5" fill="#fff"/>
<rect x="324" y="42" width="3" height="1" fill="#000"/>
<rect x="325" y="41" width="1" height="3" fill="#000"/>
<rect x="329" y="42" width="7" height="1" fill="#000"/>
<path d="M363.5 36.500L373 31.500l5.500 3.500v5.500L368.500 46l-5-4.500z" fill="#fff" stroke="#000" stroke-width="1" shape-rendering="auto"/>
<path d="M363.500 36.500l5 4 10-5.500M363.500 39l5 4.200 10-5.500M368.500 40.500v5.500" fill="none" stroke="#000" stroke-width="0.9" shape-rendering="auto"/>
<rect x="369" y="30" width="2" height="5" fill="#00007a"/>
<rect x="367" y="35" width="6" height="1" fill="#00007a"/>
<rect x="368" y="36" width="4" height="1" fill="#00007a"/>
<rect x="369" y="37" width="2" height="1" fill="#00007a"/>
<path d="M384 43h1v1h-1zM386 43h1v1h-1zM388 43h1v1h-1zM390 43h1v1h-1zM392 43h1v1h-1zM394 43h1v1h-1zM396 43h1v1h-1zM398 43h1v1h-1zM384 35h1v1h-1zM399 35h1v1h-1zM384 37h1v1h-1zM399 37h1v1h-1zM384 39h1v1h-1zM399 39h1v1h-1zM384 41h1v1h-1zM399 41h1v1h-1zM386 34h1v1h-1zM398 34h1v1h-1zM397 33h1v1h-1zM396 35h1v1h-1zM395 36h1v1h-1zM394 37h1v1h-1zM393 38h1v1h-1zM393 40h1v1h-1zM398 42h1v1h-1z" fill="#000"/>
<path d="M385 30h1v1h-1zM385 32h1v1h-1zM393 30h1v1h-1zM396 31h1v1h-1zM397 33h1v1h-1z" fill="#00007a"/>
<g mask="url(#m50)">
<path d="M388 33.500q.5-2 3.500-2q4 0 4 3l-4.500 4.500v2.500" fill="none" stroke="#1e82ff" stroke-width="2.2" />
<rect x="390" y="42" width="3" height="3" fill="#1e82ff"/>
</g>
<path d="M406 39h1v1h-1zM408 39h1v1h-1zM410 39h1v1h-1zM412 39h1v1h-1zM414 39h1v1h-1zM416 39h1v1h-1zM418 39h1v1h-1zM420 39h1v1h-1zM406 41h1v1h-1zM408 41h1v1h-1zM410 41h1v1h-1zM412 41h1v1h-1zM414 41h1v1h-1zM416 41h1v1h-1zM418 41h1v1h-1zM420 41h1v1h-1zM406 43h1v1h-1zM408 43h1v1h-1zM410 43h1v1h-1zM412 43h1v1h-1zM414 43h1v1h-1zM416 43h1v1h-1zM418 43h1v1h-1zM420 43h1v1h-1zM406 35h1v1h-1zM406 37h1v1h-1zM420 35h1v1h-1zM420 37h1v1h-1z" fill="#000"/>
<path d="M407 30h1v1h-1zM407 32h1v1h-1zM411 30h1v1h-1zM415 30h1v1h-1zM419 30h1v1h-1zM419 32h1v1h-1zM411 32h1v1h-1zM410 33h1v1h-1zM414 32h1v1h-1zM415 33h1v1h-1zM409 35h1v1h-1zM410 36h1v1h-1zM411 37h1v1h-1zM412 36h1v1h-1zM413 35h1v1h-1zM415 35h1v1h-1zM416 36h1v1h-1zM417 37h1v1h-1zM418 36h1v1h-1zM419 35h1v1h-1zM411 35h1v1h-1zM417 35h1v1h-1z" fill="#00007a"/>
<path d="M434.5 30.5h6.5l3 3-1 4-1.500 5h-8l-2-2 1.500-5z" fill="#fff" stroke="#000" stroke-width="1" />
<rect x="436" y="32" width="5" height="1" fill="#303070"/>
<rect x="435" y="34" width="5" height="1" fill="#303070"/>
<rect x="435" y="36" width="5" height="1" fill="#303070"/>
<rect x="434" y="38" width="5" height="1" fill="#303070"/>
<rect x="434" y="40" width="5" height="1" fill="#303070"/>
<rect x="429" y="30" width="3" height="1" fill="#9c9cd8"/>
<rect x="429" y="32" width="3" height="1" fill="#9c9cd8"/>
<rect x="428" y="34" width="3" height="1" fill="#9c9cd8"/>
<rect x="428" y="36" width="2" height="1" fill="#9c9cd8"/>
<rect x="428" y="38" width="2" height="1" fill="#9c9cd8"/>
<circle cx="431.5" cy="42.800" r="2.900" fill="#e00030" stroke="#000" stroke-width="1.200" shape-rendering="auto"/>
<circle cx="441.5" cy="43.500" r="2.100" fill="#e00030" stroke="#000" stroke-width="1.100" shape-rendering="auto"/>
<path d="M431 42h1v1h-1zM431 43h1v1h-1zM441 43h1v1h-1z" fill="#ffd0d8"/>
<rect x="450" y="30" width="11" height="15" fill="#808080"/>
<rect x="451" y="31" width="9" height="13" fill="#fff"/>
<rect x="452" y="33" width="4" height="1" fill="#000"/>
<rect x="453" y="35" width="5" height="1" fill="#000"/>
<rect x="453" y="37" width="4" height="1" fill="#000"/>
<rect x="454" y="39" width="4" height="1" fill="#000"/>
<rect x="453" y="41" width="6" height="1" fill="#000"/>
<path d="M464.8 31.2l-4 4.500" fill="none" stroke="#a8a8a8" stroke-width="1.6" shape-rendering="auto"/>
<path d="M455 30.5l9.500 10.500M464 30.5l-8 10.500" fill="none" stroke="#7a0000" stroke-width="2" shape-rendering="auto"/>
<rect x="463" y="36" width="1" height="9" fill="#00008c"/>
<rect x="461" y="42" width="5" height="1" fill="#00008c"/>
<rect x="462" y="43" width="3" height="1" fill="#00008c"/>
<rect x="461" y="45" width="5" height="1" fill="#00008c"/>
<g fill="none" stroke="#004600" stroke-width="2" shape-rendering="auto"><rect x="494" y="34" width="7" height="7" rx="1.5"/><rect x="499" y="39" width="7" height="7" rx="1.500"/></g>
<path d="M498.5 38.5l3 3" fill="none" stroke="#fff" stroke-width="1" shape-rendering="auto"/>
<path d="M524 31.5l6.800 7.300h-4.100v8.700h-5.400v-8.700h-4.100z" fill="url(#gk)" shape-rendering="auto"/>
<path d="M537.8 39.8l7-6.800v4h9v5.600h-9v4z" fill="url(#gk2)" shape-rendering="auto"/>
<g mask="url(#m50)">
<path d="M576 40.500l-7-6.500v3h-9v6h9v4z" fill="#000" />
</g>
<rect x="593" y="32" width="11" height="15" fill="#808080"/>
<rect x="594" y="33" width="9" height="13" fill="#fff"/>
<rect x="595" y="35" width="4" height="1" fill="#000"/>
<rect x="596" y="37" width="5" height="1" fill="#000"/>
<rect x="596" y="39" width="4" height="1" fill="#000"/>
<rect x="597" y="41" width="4" height="1" fill="#000"/>
<rect x="596" y="43" width="6" height="1" fill="#000"/>
<rect x="606" y="33" width="1" height="14" fill="#00008c"/>
<rect x="604" y="33" width="5" height="1" fill="#00008c"/>
<rect x="605" y="35" width="3" height="1" fill="#00008c"/>
<rect x="604" y="36" width="5" height="1" fill="#00008c"/>
<rect x="605" y="38" width="3" height="1" fill="#00008c"/>
<rect x="604" y="39" width="5" height="1" fill="#00008c"/>
<rect x="698" y="32" width="11" height="15" fill="#808080"/>
<rect x="699" y="33" width="9" height="13" fill="#fff"/>
<rect x="700" y="35" width="4" height="1" fill="#000"/>
<rect x="701" y="37" width="5" height="1" fill="#000"/>
<rect x="701" y="39" width="4" height="1" fill="#000"/>
<rect x="702" y="41" width="4" height="1" fill="#000"/>
<rect x="701" y="43" width="6" height="1" fill="#000"/>
<rect x="711" y="33" width="1" height="13" fill="#00008c"/>
<rect x="709" y="43" width="5" height="1" fill="#00008c"/>
<rect x="710" y="44" width="3" height="1" fill="#00008c"/>
<rect x="709" y="46" width="5" height="1" fill="#00008c"/>
<rect x="720" y="32" width="11" height="15" fill="#808080"/>
<rect x="721" y="33" width="9" height="13" fill="#fff"/>
<rect x="722" y="35" width="4" height="1" fill="#000"/>
<rect x="723" y="37" width="5" height="1" fill="#000"/>
<rect x="723" y="39" width="4" height="1" fill="#000"/>
<rect x="724" y="41" width="4" height="1" fill="#000"/>
<rect x="723" y="43" width="6" height="1" fill="#000"/>
<rect x="733" y="38" width="1" height="8" fill="#00008c"/>
<rect x="731" y="43" width="5" height="1" fill="#00008c"/>
<rect x="732" y="44" width="3" height="1" fill="#00008c"/>
<path d="M733.5 32.500l3 3-3 3-3-3z" fill="#fff" stroke="#f00000" stroke-width="1" />
<rect x="742" y="32" width="11" height="15" fill="#808080"/>
<rect x="743" y="33" width="9" height="13" fill="#fff"/>
<rect x="744" y="35" width="4" height="1" fill="#000"/>
<rect x="745" y="37" width="5" height="1" fill="#000"/>
<rect x="745" y="39" width="4" height="1" fill="#000"/>
<rect x="746" y="41" width="4" height="1" fill="#000"/>
<rect x="745" y="43" width="6" height="1" fill="#000"/>
<rect x="755" y="33" width="1" height="13" fill="#00008c"/>
<rect x="753" y="40" width="5" height="1" fill="#00008c"/>
<rect x="754" y="41" width="3" height="1" fill="#00008c"/>
<rect x="753" y="43" width="5" height="1" fill="#00008c"/>
<rect x="754" y="44" width="3" height="1" fill="#00008c"/>
<rect x="764" y="32" width="11" height="15" fill="#808080"/>
<rect x="765" y="33" width="9" height="13" fill="#fff"/>
<rect x="766" y="35" width="4" height="1" fill="#000"/>
<rect x="767" y="37" width="5" height="1" fill="#000"/>
<rect x="767" y="39" width="4" height="1" fill="#000"/>
<rect x="768" y="41" width="4" height="1" fill="#000"/>
<rect x="767" y="43" width="6" height="1" fill="#000"/>
<rect x="777" y="37" width="1" height="9" fill="#00008c"/>
<rect x="775" y="43" width="5" height="1" fill="#00008c"/>
<rect x="776" y="44" width="3" height="1" fill="#00008c"/>
<rect x="775" y="46" width="5" height="1" fill="#00008c"/>
<path d="M778.8 33.2l-4 4.500" fill="none" stroke="#a8a8a8" stroke-width="1.6" shape-rendering="auto"/>
<path d="M769 32.5l9.500 10.500M778 32.5l-8 10.500" fill="none" stroke="#7a0000" stroke-width="2" shape-rendering="auto"/>
<g mask="url(#m50)">
<path d="M790 33h6l4 4v6l-4 4h-6l-4-4v-6z" fill="#e62000" />
</g>
<rect x="790" y="38" width="7" height="4" fill="#f0f0f0"/>
<rect x="797" y="39" width="3" height="2" fill="#f0f0f0"/>
<rect x="791" y="37" width="2" height="6" fill="#f0f0f0"/>
<path d="M791 38h1v1h-1zM792 40h1v1h-1zM791 42h1v1h-1zM794 39h1v1h-1zM796 39h1v1h-1zM793 41h1v1h-1zM795 41h1v1h-1z" fill="#e62000"/>
<g mask="url(#m50)">
<rect x="825" y="40" width="12" height="8" fill="#000"/>
<path d="M829 40v-6l8 4v2z" fill="#000" />
<rect x="831" y="35" width="2" height="11" fill="#ffff00"/>
<rect x="834" y="37" width="2" height="9" fill="#ff0000"/>
</g>
<path d="M828 43h1v1h-1zM829 44h1v1h-1z" fill="#00e000"/>
<g mask="url(#m50)">
<rect x="851" y="40" width="12" height="8" fill="#000"/>
<path d="M855 40v-6l8 4v2z" fill="#000" />
<rect x="857" y="35" width="2" height="11" fill="#ffff00"/>
<rect x="860" y="37" width="2" height="9" fill="#ff0000"/>
</g>
<path d="M854 43h1v1h-1zM855 44h1v1h-1z" fill="#00e000"/>
<g mask="url(#m50)">
<path d="M822 33h7v5h-4v2h-3z" fill="#000" />
<path d="M848 33h9v7h-2v-4h-2v4h-2v-4h-1v4h-2z" fill="#000" />
</g>
<rect x="825" y="35" width="1" height="1" fill="#f0f0f0"/>
<path d="M875.5 44.500l-4-5.500 1.500-1 3 2v-6.500h2v-1.500h2v1h2v1.500h2v8l-2 5h-6z" fill="#fff" stroke="#000" stroke-width="1" shape-rendering="auto"/>
<rect x="878" y="34" width="1" height="6" fill="#000"/>
<rect x="880" y="33" width="1" height="7" fill="#000"/>
<rect x="882" y="35" width="1" height="5" fill="#000"/>
<path d="M876 45l5-4 2 3-4 4z" fill="#7fa8ea" shape-rendering="auto"/>
<circle cx="883" cy="40" r="2" fill="#b4b4b4" shape-rendering="auto"/>
<path d="M970 30h5v4.500h3.500l-6 5.500-6-5.500h3.500z" fill="url(#gb)" shape-rendering="auto"/>
<circle cx="972.5" cy="43.6" r="2.6" fill="#0a28f0" shape-rendering="auto"/>
<path d="M986 37C986 32.500 989.5 30.300 993 30.300C997 30.300 999.2 33 999.5 37H1002L996.5 42.700L991 37H995.5C995.3 35 994.2 33.300 992.5 33.300C990 33.300 988.3 35 988 37z" fill="url(#gb)" shape-rendering="auto"/>
<circle cx="988.5" cy="40.6" r="2.4" fill="#0a28f0" shape-rendering="auto"/>
<path d="M1016.5 29.800l6 6h-3.500v4h-5v-4h-3.500z" fill="url(#gb)" shape-rendering="auto"/>
<circle cx="1016.5" cy="43.6" r="2.6" fill="#0a28f0" shape-rendering="auto"/>
<path d="M1047 30h5v4.500h3.500l-6 5.500-6-5.500h3.500z" fill="url(#gb)" shape-rendering="auto"/>
<circle cx="1049.5" cy="43.6" r="2.6" fill="#0a28f0" shape-rendering="auto"/>
<rect x="1043" y="41" width="1" height="5" fill="#0a28f0"/>
<rect x="1045" y="41" width="1" height="5" fill="#0a28f0"/>
<rect x="1053" y="41" width="1" height="5" fill="#0a28f0"/>
<rect x="1055" y="41" width="1" height="5" fill="#0a28f0"/>
<rect x="1061" y="38" width="5" height="1" fill="#000"/>
<rect x="1062" y="39" width="3" height="1" fill="#000"/>
<rect x="1063" y="40" width="1" height="1" fill="#000"/>
<path d="M1072 37C1072 32.500 1075.5 30.300 1079 30.300C1083 30.300 1085.2 33 1085.5 37H1088L1082.5 42.700L1077 37H1081.5C1081.3 35 1080.2 33.300 1078.5 33.300C1076 33.300 1074.3 35 1074 37z" fill="url(#gb)" shape-rendering="auto"/>
<circle cx="1074.5" cy="40.6" r="2.4" fill="#0a28f0" shape-rendering="auto"/>
<rect x="1073" y="43" width="1" height="3" fill="#0a28f0"/>
<rect x="1075" y="43" width="1" height="3" fill="#0a28f0"/>
<rect x="1077" y="43" width="1" height="3" fill="#0a28f0"/>
<rect x="1079" y="43" width="1" height="3" fill="#0a28f0"/>
<rect x="1081" y="43" width="1" height="3" fill="#0a28f0"/>
<rect x="1083" y="43" width="1" height="3" fill="#0a28f0"/>
<rect x="1085" y="43" width="1" height="3" fill="#0a28f0"/>
<rect x="1087" y="43" width="1" height="3" fill="#0a28f0"/>
<path d="M1102.5 29.800l6 6h-3.500v4h-5v-4h-3.500z" fill="url(#gb)" shape-rendering="auto"/>
<circle cx="1102.5" cy="43.6" r="2.6" fill="#0a28f0" shape-rendering="auto"/>
<rect x="1096" y="41" width="1" height="5" fill="#0a28f0"/>
<rect x="1098" y="41" width="1" height="5" fill="#0a28f0"/>
<rect x="1106" y="41" width="1" height="5" fill="#0a28f0"/>
<rect x="1108" y="41" width="1" height="5" fill="#0a28f0"/>
<path d="M1143.8 39.300l.9-5.600h3.300l1.600-2.200h6.400l-1 6h-4l-1.500 1.800z" fill="url(#gfl)" stroke="#2c8eea" stroke-width="1.5" shape-rendering="auto" stroke-linejoin="round"/>
<path d="M1156.8 31.200l-1.800 11.500" fill="none" stroke="#b06c1c" stroke-width="1.7" shape-rendering="auto"/>
<path d="M1156.2 31.300l1.500-.5" fill="none" stroke="#dca858" stroke-width="1.6" shape-rendering="auto"/>
<circle cx="1155.5" cy="42.500" r="3.300" fill="#4a9c2c" stroke="#2c6c18" stroke-width=".8" shape-rendering="auto"/>
<rect x="1153" y="42" width="5" height="1" fill="#fff"/>
<rect x="1155" y="40" width="1" height="5" fill="#fff"/>
<rect x="1163" y="38" width="5" height="1" fill="#000"/>
<rect x="1164" y="39" width="3" height="1" fill="#000"/>
<rect x="1165" y="40" width="1" height="1" fill="#000"/>
<path d="M1174.8 39.300l.9-5.600h3.300l1.600-2.200h6.400l-1 6h-4l-1.500 1.800z" fill="url(#gfl)" stroke="#2c8eea" stroke-width="1.5" shape-rendering="auto" stroke-linejoin="round"/>
<path d="M1187.8 31.200l-1.800 11.500" fill="none" stroke="#b06c1c" stroke-width="1.7" shape-rendering="auto"/>
<path d="M1187.2 31.300l1.500-.5" fill="none" stroke="#dca858" stroke-width="1.6" shape-rendering="auto"/>
<circle cx="1186.5" cy="42.500" r="3.300" fill="#e8640c" stroke="#b44808" stroke-width=".8" shape-rendering="auto"/>
<rect x="1184" y="42" width="5" height="1" fill="#fff"/>
<rect x="1194" y="38" width="5" height="1" fill="#000"/>
<rect x="1195" y="39" width="3" height="1" fill="#000"/>
<rect x="1196" y="40" width="1" height="1" fill="#000"/>
<path d="M1205.8 39.300l.9-5.600h3.300l1.600-2.200h6.400l-1 6h-4l-1.500 1.800z" fill="url(#gfl)" stroke="#2c8eea" stroke-width="1.5" shape-rendering="auto" stroke-linejoin="round"/>
<path d="M1218.8 31.200l-1.800 11.500" fill="none" stroke="#b06c1c" stroke-width="1.7" shape-rendering="auto"/>
<path d="M1218.2 31.300l1.500-.5" fill="none" stroke="#dca858" stroke-width="1.6" shape-rendering="auto"/>
<path d="M1219.500 35.500l-8 8.500" fill="none" stroke="#b87828" stroke-width="4.4" shape-rendering="auto" stroke-linecap="round"/>
<path d="M1219.500 35.500l-8 8.500" fill="none" stroke="#f4d850" stroke-width="2.4" shape-rendering="auto"/>
<path d="M1212 43.500l-2.800 3 .8-3.800z" fill="#e8c898" stroke="#b87828" stroke-width="0.6" shape-rendering="auto"/>
<path d="M1227.8 39.300l.9-5.600h3.300l1.600-2.200h6.400l-1 6h-4l-1.500 1.800z" fill="url(#gfl)" stroke="#2c8eea" stroke-width="1.5" shape-rendering="auto" stroke-linejoin="round"/>
<path d="M1240.8 31.200l-1.800 11.500" fill="none" stroke="#b06c1c" stroke-width="1.7" shape-rendering="auto"/>
<path d="M1240.2 31.300l1.500-.5" fill="none" stroke="#dca858" stroke-width="1.6" shape-rendering="auto"/>
<rect x="1233" y="37" width="10" height="9" fill="#4a7ad8"/>
<rect x="1235" y="37" width="6" height="4" fill="#fff"/>
<rect x="1235" y="42" width="6" height="3" fill="#e8f0ff"/>
<rect x="1236" y="43" width="4" height="1" fill="#7cc23c"/>
<rect x="1236" y="38" width="1" height="1" fill="#4a7ad8"/>
<rect x="1247" y="38" width="5" height="1" fill="#000"/>
<rect x="1248" y="39" width="3" height="1" fill="#000"/>
<rect x="1249" y="40" width="1" height="1" fill="#000"/>
<path d="M1258.8 39.300l.9-5.600h3.300l1.600-2.200h6.400l-1 6h-4l-1.500 1.800z" fill="url(#gfl)" stroke="#2c8eea" stroke-width="1.5" shape-rendering="auto" stroke-linejoin="round"/>
<path d="M1271.8 31.200l-1.800 11.500" fill="none" stroke="#b06c1c" stroke-width="1.7" shape-rendering="auto"/>
<path d="M1271.2 31.300l1.500-.5" fill="none" stroke="#dca858" stroke-width="1.6" shape-rendering="auto"/>
<path d="M1264 39.500h5v-2.500l5 4.500-5 4.500v-2.500h-5z" fill="#7cbc58" stroke="#3c8c1c" stroke-width="1" shape-rendering="auto"/>
<path d="M25 67V76l2.400-2.300 3.300 6.200 2-1-3.300-6h3.200z" fill="#000" shape-rendering="auto"/>
<rect x="48" y="66" width="7" height="1" fill="#000"/>
<rect x="48" y="67" width="7" height="1" fill="#000"/>
<rect x="48" y="66" width="1" height="7" fill="#000"/>
<rect x="49" y="66" width="1" height="7" fill="#000"/>
<rect x="51" y="69" width="8" height="8" fill="#000"/>
<rect x="53" y="71" width="4" height="4" fill="#f0f0f0"/>
<rect x="60" y="72" width="1" height="8" fill="#000"/>
<rect x="61" y="72" width="1" height="8" fill="#000"/>
<rect x="55" y="78" width="7" height="1" fill="#000"/>
<rect x="55" y="79" width="7" height="1" fill="#000"/>
<path d="M57 76h1v1h-1zM58 77h1v1h-1zM59 77h1v1h-1zM58 76h1v1h-1zM56 77h1v1h-1zM57 77h1v1h-1z" fill="#000"/>
<g mask="url(#m50)">
<path d="M80 64l4 4h-3v3h3v-3l4 4.500-4 4v-3h-3v3h3l-4 4-4-4h3v-3h-3v3l-4-4 4-4.500v3h3v-3h-3z" fill="#000" />
</g>
<rect x="102" y="66" width="1" height="11" fill="#000"/>
<rect x="100" y="76" width="5" height="3" fill="#000"/>
<rect x="101" y="77" width="3" height="1" fill="#f0f0f0"/>
<rect x="109" y="66" width="1" height="11" fill="#000"/>
<rect x="107" y="76" width="5" height="3" fill="#000"/>
<rect x="108" y="77" width="3" height="1" fill="#f0f0f0"/>
<rect x="126" y="67" width="6" height="1" fill="#000"/>
<rect x="131" y="67" width="1" height="12" fill="#000"/>
<rect x="131" y="78" width="9" height="1" fill="#000"/>
<rect x="135" y="67" width="1" height="1" fill="#000"/>
<rect x="135" y="69" width="1" height="1" fill="#000"/>
<rect x="135" y="71" width="1" height="1" fill="#000"/>
<rect x="135" y="73" width="1" height="1" fill="#000"/>
<rect x="135" y="75" width="1" height="1" fill="#000"/>
<rect x="135" y="77" width="1" height="1" fill="#000"/>
<rect x="125" y="71" width="5" height="1" fill="#000"/>
<rect x="128" y="70" width="1" height="3" fill="#000"/>
<rect x="125" y="76" width="5" height="1" fill="#000"/>
<rect x="128" y="75" width="1" height="3" fill="#000"/>
<rect x="137" y="69" width="3" height="1" fill="#000"/>
<rect x="138" y="68" width="1" height="3" fill="#000"/>
<rect x="137" y="74" width="3" height="1" fill="#000"/>
<rect x="138" y="73" width="1" height="3" fill="#000"/>
<rect x="159" y="64" width="8" height="16" fill="#000"/>
<path d="M161 65h4l1 1v3l-1 1h-4l-1-1v-3z" fill="#ff0000" />
<rect x="161" y="70" width="4" height="4" fill="#ffff00"/>
<rect x="161" y="70" width="4" height="4" fill="#b0b0b0" mask="url(#m50)"/>
<rect x="161" y="75" width="4" height="4" fill="#00e000"/>
<rect x="161" y="75" width="4" height="4" fill="#b0b0b0" mask="url(#m50b)"/>
<path d="M169.5 68.500h1.500l3.500 3.500v1l-3.500 3.500h-1.500z" fill="#fff" stroke="#000" stroke-width="1" />
<rect x="167" y="70" width="2" height="1" fill="#7fbfff"/>
<rect x="167" y="74" width="2" height="1" fill="#7fbfff"/>
<rect x="175" y="72" width="1" height="1" fill="#7fbfff"/>
<path d="M200 66h1v1h-1zM202 66h1v1h-1zM202 68h1v1h-1zM202 70h1v1h-1zM202 72h1v1h-1zM202 74h1v1h-1zM202 76h1v1h-1zM204 76h1v1h-1zM206 76h1v1h-1zM208 76h1v1h-1zM210 76h1v1h-1zM212 76h1v1h-1zM214 76h1v1h-1zM207 63h1v1h-1zM207 65h1v1h-1zM207 67h1v1h-1zM207 69h1v1h-1zM211 63h1v1h-1zM211 65h1v1h-1zM211 67h1v1h-1zM211 69h1v1h-1zM209 63h1v1h-1z" fill="#0000ff"/>
<path d="M205 71h1v1h-1zM206 72h1v1h-1zM207 73h1v1h-1zM208 72h1v1h-1zM209 71h1v1h-1zM210 72h1v1h-1zM211 73h1v1h-1zM212 72h1v1h-1zM213 71h1v1h-1z" fill="#000"/>
<path d="M222 66h1v1h-1zM223 67h1v1h-1zM223 69h1v1h-1zM223 71h1v1h-1zM223 73h1v1h-1zM224 75h1v1h-1zM225 76h1v1h-1zM227 76h1v1h-1zM229 76h1v1h-1zM231 76h1v1h-1zM231 72h1v1h-1zM231 74h1v1h-1z" fill="#0000ff"/>
<path d="M231.5 63.500l3 3-5 5-3-3z" fill="#fff" stroke="#000" stroke-width="1" />
<path d="M231.5 64.500l2 2-4 4-2-2z" fill="#888" mask="url(#m50)"/>
<path d="M235 66h1v1h-1zM236 66h1v1h-1z" fill="#00e8ff"/>
<path d="M258 63h1v1h-1zM260 63h1v1h-1zM258 65h1v1h-1zM260 65h1v1h-1zM258 67h1v1h-1zM260 67h1v1h-1zM257 69h1v1h-1zM255 70h1v1h-1zM260 69h1v1h-1zM262 70h1v1h-1zM264 71h1v1h-1zM266 72h1v1h-1zM267 73h1v1h-1zM269 73h1v1h-1zM267 75h1v1h-1zM269 75h1v1h-1zM267 77h1v1h-1zM269 77h1v1h-1zM256 69h1v1h-1zM261 69h1v1h-1z" fill="#0000ff"/>
<path d="M269 66h1v1h-1zM269 68h1v1h-1zM268 69h1v1h-1zM266 69h1v1h-1zM262 73h1v1h-1zM262 75h1v1h-1zM261 76h1v1h-1zM259 76h1v1h-1z" fill="#000"/>
<path d="M277 68h1v1h-1zM277 70h1v1h-1zM277 72h1v1h-1zM277 74h1v1h-1zM277 76h1v1h-1zM281 68h1v1h-1zM281 70h1v1h-1zM281 72h1v1h-1zM281 74h1v1h-1zM281 76h1v1h-1zM283 68h1v1h-1zM283 70h1v1h-1zM283 72h1v1h-1zM283 74h1v1h-1zM283 76h1v1h-1zM289 68h1v1h-1zM289 70h1v1h-1zM289 72h1v1h-1zM289 74h1v1h-1zM289 76h1v1h-1zM291 68h1v1h-1zM291 70h1v1h-1zM291 72h1v1h-1zM291 74h1v1h-1zM291 76h1v1h-1zM278 66h1v1h-1zM279 65h1v1h-1zM280 66h1v1h-1zM282 66h1v1h-1zM284 66h1v1h-1zM285 65h1v1h-1zM288 65h1v1h-1zM289 66h1v1h-1zM290 66h1v1h-1zM291 66h1v1h-1z" fill="#0000ff"/>
<path d="M285 62h1v1h-1zM286 63h1v1h-1zM287 62h1v1h-1zM286 65h1v1h-1zM286 67h1v1h-1zM286 69h1v1h-1zM286 71h1v1h-1zM286 73h1v1h-1zM286 75h1v1h-1zM286 77h1v1h-1z" fill="#000"/>
<path d="M300 65h1v1h-1zM300 67h1v1h-1zM300 69h1v1h-1zM300 71h1v1h-1zM303 66h1v1h-1zM303 68h1v1h-1zM310 67h1v1h-1zM310 71h1v1h-1zM313 66h1v1h-1zM313 68h1v1h-1zM303 70h1v1h-1zM304 71h1v1h-1zM305 70h1v1h-1zM305 72h1v1h-1z" fill="#000"/>
<path d="M300 63h1v1h-1zM313 64h1v1h-1zM312 65h1v1h-1zM313 70h1v1h-1z" fill="#ff0000"/>
<path d="M303.5 64.500l7.500 5.500M311.5 65.500l-10 7.500" fill="none" stroke="#ff0000" stroke-width="1" shape-rendering="auto"/>
<path d="M300 73h1v1h-1zM301 74h1v1h-1zM301 76h1v1h-1zM306 73h1v1h-1zM306 75h1v1h-1zM306 77h1v1h-1zM310 73h1v1h-1zM311 74h1v1h-1zM311 76h1v1h-1z" fill="#0000ff"/>
<path d="M333 65h1v1h-1zM333 67h1v1h-1zM333 69h1v1h-1zM333 71h1v1h-1zM333 73h1v1h-1zM333 75h1v1h-1zM334 76h1v1h-1zM336 76h1v1h-1zM338 76h1v1h-1zM340 76h1v1h-1zM342 75h1v1h-1zM343 65h1v1h-1zM343 67h1v1h-1zM343 69h1v1h-1zM343 71h1v1h-1zM343 73h1v1h-1zM345 65h1v1h-1z" fill="#0000ff"/>
<path d="M337 71h1v1h-1zM339 69h1v1h-1zM340 70h1v1h-1zM341 71h1v1h-1zM340 72h1v1h-1zM339 73h1v1h-1zM345 71h1v1h-1z" fill="#000"/>
<path d="M354 64h1v1h-1zM356 64h1v1h-1zM356 66h1v1h-1zM356 68h1v1h-1zM356 70h1v1h-1zM357 72h1v1h-1zM358 73h1v1h-1zM359 73h1v1h-1zM361 73h1v1h-1zM363 73h1v1h-1zM365 73h1v1h-1zM367 73h1v1h-1zM367 65h1v1h-1zM367 67h1v1h-1zM367 69h1v1h-1zM367 71h1v1h-1zM368 64h1v1h-1z" fill="#0000ff"/>
<path d="M359 77h1v1h-1zM360 76h1v1h-1zM361 75h1v1h-1zM362 76h1v1h-1zM363 77h1v1h-1zM365 77h1v1h-1zM366 76h1v1h-1zM367 75h1v1h-1zM368 76h1v1h-1z" fill="#000"/>
<path d="M375 63h1v1h-1zM377 63h1v1h-1zM377 65h1v1h-1zM377 67h1v1h-1zM379 67h1v1h-1zM375 69h1v1h-1zM376 70h1v1h-1zM379 69h1v1h-1zM378 71h1v1h-1zM377 72h1v1h-1zM376 73h1v1h-1zM378 73h1v1h-1zM377 75h1v1h-1zM376 76h1v1h-1zM379 77h1v1h-1zM379 75h1v1h-1zM383 64h1v1h-1zM385 63h1v1h-1zM386 64h1v1h-1zM387 65h1v1h-1zM388 66h1v1h-1zM389 67h1v1h-1zM391 67h1v1h-1zM382 66h1v1h-1zM381 67h1v1h-1zM381 69h1v1h-1zM383 69h1v1h-1zM383 71h1v1h-1zM383 73h1v1h-1zM385 73h1v1h-1zM387 73h1v1h-1zM389 73h1v1h-1zM383 75h1v1h-1zM385 75h1v1h-1zM387 75h1v1h-1zM389 75h1v1h-1zM382 76h1v1h-1z" fill="#0000ff"/>
<path d="M388 70h1v1h-1zM390 70h1v1h-1z" fill="#000"/>
<rect x="436" y="62" width="1" height="11" fill="#ffd800"/>
<rect x="437" y="63" width="1" height="10" fill="#3a2c00"/>
<rect x="431" y="72" width="12" height="5" fill="#ffd800"/>
<rect x="433" y="74" width="9" height="2" fill="#f0f0f0"/>
<rect x="432" y="77" width="12" height="1" fill="#3a2c00"/>
<rect x="443" y="73" width="1" height="5" fill="#3a2c00"/>
<rect x="439" y="66" width="7" height="1" fill="#ffd800"/>
<rect x="441" y="62" width="1" height="8" fill="#ffd800"/>
<rect x="442" y="63" width="1" height="8" fill="#3a2c00"/>
<rect x="440" y="67" width="7" height="1" fill="#3a2c00"/>
<rect x="441" y="66" width="1" height="1" fill="#ffd800"/>
<path d="M458 62h1v1h-1zM458 64h1v1h-1zM458 66h1v1h-1zM458 68h1v1h-1zM458 70h1v1h-1zM458 72h1v1h-1zM461 65h1v1h-1zM463 65h1v1h-1zM465 65h1v1h-1zM455 72h1v1h-1zM457 72h1v1h-1zM459 72h1v1h-1zM461 72h1v1h-1zM463 72h1v1h-1zM454 73h1v1h-1zM453 74h1v1h-1zM454 75h1v1h-1zM456 74h1v1h-1zM458 74h1v1h-1zM460 74h1v1h-1zM462 74h1v1h-1zM464 74h1v1h-1z" fill="#ffd800"/>
<path d="M462 66h1v1h-1zM464 66h1v1h-1zM466 66h1v1h-1zM464 73h1v1h-1zM465 74h1v1h-1zM455 76h1v1h-1zM457 76h1v1h-1zM459 76h1v1h-1zM461 76h1v1h-1zM463 76h1v1h-1zM465 76h1v1h-1zM456 77h1v1h-1zM458 77h1v1h-1zM460 77h1v1h-1zM462 77h1v1h-1zM464 77h1v1h-1zM466 77h1v1h-1zM454 76h1v1h-1zM456 75h1v1h-1zM458 75h1v1h-1zM460 75h1v1h-1zM462 75h1v1h-1zM464 75h1v1h-1z" fill="#3a2c00"/>
<rect x="475" y="63" width="6" height="1" fill="#008030"/>
<rect x="480" y="63" width="1" height="14" fill="#008030"/>
<rect x="480" y="76" width="11" height="1" fill="#008030"/>
<path d="M481.600 69l4.700-4.600v3.600h4.700v2h-4.700v3.600z" fill="#3400d0" shape-rendering="auto"/>
<rect x="497" y="76" width="11" height="1" fill="#008030"/>
<rect x="507" y="63" width="1" height="14" fill="#008030"/>
<rect x="507" y="63" width="6" height="1" fill="#008030"/>
<path d="M506.400 69l-4.700-4.600v3.600h-4.700v2h4.700v3.600z" fill="#3400d0" shape-rendering="auto"/>
<path d="M519 63h1v1h-1zM521 63h1v1h-1zM523 63h1v1h-1zM524 64h1v1h-1zM524 66h1v1h-1zM524 72h1v1h-1zM524 74h1v1h-1zM524 76h1v1h-1zM526 76h1v1h-1zM528 76h1v1h-1zM530 76h1v1h-1zM532 76h1v1h-1zM534 76h1v1h-1z" fill="#108030"/>
<path d="M522 68h1v1h-1zM526 68h1v1h-1zM523 69h1v1h-1zM525 69h1v1h-1zM524 70h1v1h-1zM524 68h1v1h-1zM530 72h1v1h-1z" fill="#4010c0"/>
<path d="M527 71h1v1h-1zM526 72h1v1h-1zM528 72h1v1h-1zM527 73h1v1h-1z" fill="#4010c0"/>
<path d="M541 63h1v1h-1zM543 63h1v1h-1zM545 63h1v1h-1zM547 63h1v1h-1zM549 63h1v1h-1zM549 65h1v1h-1zM549 71h1v1h-1zM549 73h1v1h-1zM550 75h1v1h-1zM551 76h1v1h-1zM553 76h1v1h-1zM555 76h1v1h-1zM557 76h1v1h-1z" fill="#108030"/>
<path d="M549 67h1v1h-1zM548 68h1v1h-1zM550 68h1v1h-1zM549 69h1v1h-1z" fill="#4010c0"/>
<path d="M546 72h1v1h-1zM545 73h1v1h-1zM547 73h1v1h-1zM546 74h1v1h-1z" fill="#4010c0"/>
<path d="M543 73h1v1h-1z" fill="#4010c0"/>
<path d="M569 63h1v1h-1zM571 63h1v1h-1zM573 63h1v1h-1zM575 63h1v1h-1zM577 63h1v1h-1zM569 65h1v1h-1zM569 71h1v1h-1zM569 73h1v1h-1zM568 75h1v1h-1zM564 76h1v1h-1zM566 76h1v1h-1zM568 76h1v1h-1z" fill="#108030"/>
<path d="M569 67h1v1h-1zM568 68h1v1h-1zM570 68h1v1h-1zM569 69h1v1h-1z" fill="#4010c0"/>
<path d="M572 72h1v1h-1zM571 73h1v1h-1zM573 73h1v1h-1zM572 74h1v1h-1z" fill="#4010c0"/>
<path d="M575 73h1v1h-1z" fill="#4010c0"/>
<path d="M595 63h1v1h-1zM597 63h1v1h-1zM599 63h1v1h-1zM595 65h1v1h-1zM595 71h1v1h-1zM595 73h1v1h-1zM594 75h1v1h-1zM586 76h1v1h-1zM588 76h1v1h-1zM590 76h1v1h-1zM592 76h1v1h-1zM594 76h1v1h-1z" fill="#108030"/>
<path d="M595 67h1v1h-1zM594 68h1v1h-1zM596 68h1v1h-1zM595 69h1v1h-1z" fill="#4010c0"/>
<path d="M592 72h1v1h-1zM591 73h1v1h-1zM593 73h1v1h-1zM592 74h1v1h-1z" fill="#4010c0"/>
<path d="M589 73h1v1h-1z" fill="#4010c0"/>
<path d="M630.5 63.500l1 1 1-1 1 1 3 3-3 3-1-1-1 1-1-1M633.500 76.500l3-3M630.5 75.500l1 1 1-1 1 1" fill="none" stroke="#000" stroke-width="1" />
<g mask="url(#m50)">
<rect x="637" y="70" width="9" height="1" fill="#0060ff"/>
<rect x="637" y="70" width="9" height="1" fill="#0060ff"/>
<rect x="638" y="69" width="8" height="1" fill="#0060ff"/>
<rect x="638" y="71" width="8" height="1" fill="#0060ff"/>
<rect x="639" y="68" width="3" height="1" fill="#0060ff"/>
<rect x="639" y="72" width="3" height="1" fill="#0060ff"/>
<rect x="640" y="67" width="2" height="1" fill="#0060ff"/>
<rect x="640" y="73" width="2" height="1" fill="#0060ff"/>
</g>
<path d="M651 70h1v1h-1zM652 71h1v1h-1zM653 71h1v1h-1zM654 70h1v1h-1zM652 72h1v1h-1z" fill="#000"/>
<g mask="url(#m50)">
<rect x="661" y="70" width="9" height="1" fill="#0060ff"/>
<rect x="661" y="70" width="9" height="1" fill="#0060ff"/>
<rect x="661" y="69" width="8" height="1" fill="#0060ff"/>
<rect x="661" y="71" width="8" height="1" fill="#0060ff"/>
<rect x="665" y="68" width="3" height="1" fill="#0060ff"/>
<rect x="665" y="72" width="3" height="1" fill="#0060ff"/>
<rect x="665" y="67" width="2" height="1" fill="#0060ff"/>
<rect x="665" y="73" width="2" height="1" fill="#0060ff"/>
</g>
<path d="M676.5 63.500l-1 1-1-1-1 1-3 3 3 3 1-1 1 1 1-1M673.500 76.500l-3-3M676.500 75.500l-1 1-1-1-1 1" fill="none" stroke="#000" stroke-width="1" />
<path d="M682 70h1v1h-1zM683 71h1v1h-1zM684 71h1v1h-1zM685 70h1v1h-1zM683 72h1v1h-1z" fill="#000"/>
<path d="M692 63h1v1h-1zM692 65h1v1h-1zM694 63h1v1h-1zM694 65h1v1h-1zM695 64h1v1h-1zM698 64h1v1h-1zM700 64h1v1h-1zM692 75h1v1h-1zM692 77h1v1h-1zM694 75h1v1h-1zM694 77h1v1h-1zM695 76h1v1h-1zM698 76h1v1h-1zM700 76h1v1h-1zM692 69h1v1h-1zM692 71h1v1h-1zM694 70h1v1h-1z" fill="#000"/>
<path d="M699.500 66l4.500 4.500-4.500 4.500-4.500-4.500z" fill="#f0f0f0" />
<path d="M699.500 65.500l5 5-5 5-5-5z" fill="#000" mask="url(#m50b)"/>
<path d="M699 68h1v1h-1zM697 70h1v1h-1zM699 70h1v1h-1zM701 70h1v1h-1zM699 72h1v1h-1z" fill="#00ff00"/>
<path d="M706 69h1v1h-1zM705 70h1v1h-1zM707 70h1v1h-1zM706 71h1v1h-1z" fill="#0000ff"/>
<g mask="url(#m50)">
<path d="M891.500 69h12l-6 6.500z" fill="#000" />
</g>
<g mask="url(#m50)">
<path d="M913 75v-7l2-4 1-1h2l2 3v9z" fill="url(#gbn)" />
<path d="M920 75v-9l2-3h2l1 1 2 4v7z" fill="url(#gbn)" />
</g>
<rect x="918" y="71" width="4" height="5" fill="#f0f0f0"/>
<g mask="url(#m50)">
<path d="M930 75v-7l2-4 1-1h2l2 3v9z" fill="url(#gbn)" />
<path d="M937 75v-9l2-3h2l1 1 2 4v7z" fill="url(#gbn)" />
</g>
<rect x="935" y="71" width="4" height="5" fill="#f0f0f0"/>
<g mask="url(#m50)">
<path d="M955 75v-7l2-4 1-1h2l2 3v9z" fill="url(#gbn)" />
<path d="M962 75v-9l2-3h2l1 1 2 4v7z" fill="url(#gbn)" />
</g>
<rect x="960" y="71" width="4" height="5" fill="#f0f0f0"/>
<g mask="url(#m50b)">
<path d="M910 75.500l3.500-3.500v2h5v3h-5v2z" fill="#0000ff" />
<path d="M946.500 75.500l-3.500-3.500v2h-5v3h5v2z" fill="#0000ff" />
</g>
<rect x="963" y="68" width="6" height="8" fill="#f0f0f0"/>
<g mask="url(#m50)">
<path d="M967 66l4.500 3.500-3.500 3.500-4.500-3.500z" fill="#a8a8a8" />
</g>
<g mask="url(#m50b)">
<path d="M963.500 71.500l3.500 3-4.500 4.500-3.500-3z" fill="#6f8fff" />
</g>
<circle cx="1012" cy="68" r="5.400" fill="none" stroke="#000" stroke-width="1.150" shape-rendering="auto"/>
<path d="M1015.5 72.500l4.200 4.200" fill="none" stroke="#0000c0" stroke-width="3" shape-rendering="auto" stroke-linecap="round"/>
<path d="M1016.2 73.200l3.500 3.500" fill="none" stroke="#fff" stroke-width="1" shape-rendering="auto" stroke-dasharray="1 1.200"/>
<rect x="1009" y="67" width="6" height="2" fill="#000"/>
<rect x="1011" y="65" width="2" height="6" fill="#000"/>
<circle cx="1034" cy="68" r="5.400" fill="none" stroke="#000" stroke-width="1.150" shape-rendering="auto"/>
<path d="M1037.5 72.500l4.200 4.200" fill="none" stroke="#0000c0" stroke-width="3" shape-rendering="auto" stroke-linecap="round"/>
<path d="M1038.2 73.200l3.500 3.500" fill="none" stroke="#fff" stroke-width="1" shape-rendering="auto" stroke-dasharray="1 1.200"/>
<rect x="1031" y="67" width="6" height="2" fill="#000"/>
<circle cx="1056" cy="68" r="5.400" fill="#004080" stroke="#000" stroke-width="1.150" shape-rendering="auto"/>
<path d="M1059.5 72.500l4.200 4.200" fill="none" stroke="#0000c0" stroke-width="3" shape-rendering="auto" stroke-linecap="round"/>
<path d="M1060.2 73.200l3.500 3.500" fill="none" stroke="#fff" stroke-width="1" shape-rendering="auto" stroke-dasharray="1 1.200"/>
<path d="M1052.500 67.500c0-2 1.500-3.500 3.500-3.500" fill="none" stroke="#fff" stroke-width="1.2" shape-rendering="auto"/>
<rect x="1076" y="62" width="1" height="11" fill="#ffcc00"/>
<rect x="1077" y="63" width="1" height="10" fill="#884400"/>
<rect x="1071" y="72" width="12" height="6" fill="#ffcc00"/>
<rect x="1072" y="73" width="11" height="5" fill="#884400"/>
<rect x="1073" y="74" width="9" height="3" fill="#f0f0f0"/>
<circle cx="1082.500" cy="65.500" r="3.200" fill="#c0c0c0" stroke="#000" stroke-width="1.200" shape-rendering="auto"/>
<path d="M1084 67l3.500 1.500v3.500z" fill="#0000ff" shape-rendering="auto"/>
<rect x="1096" y="66" width="1" height="8" fill="#ffcc00"/>
<rect x="1097" y="67" width="1" height="7" fill="#884400"/>
<rect x="1093" y="73" width="8" height="5" fill="#ffcc00"/>
<rect x="1094" y="74" width="7" height="4" fill="#884400"/>
<rect x="1095" y="75" width="5" height="2" fill="#ffe680"/>
<rect x="1104" y="66" width="1" height="8" fill="#ffcc00"/>
<rect x="1105" y="67" width="1" height="7" fill="#884400"/>
<rect x="1101" y="73" width="8" height="5" fill="#ffcc00"/>
<rect x="1102" y="74" width="7" height="4" fill="#884400"/>
<rect x="1103" y="75" width="5" height="2" fill="#ffe680"/>
<circle cx="1104.500" cy="65.500" r="3.200" fill="#c0c0c0" stroke="#000" stroke-width="1.200" shape-rendering="auto"/>
<rect x="1104" y="66" width="1" height="4" fill="#ffcc00"/>
<path d="M1106 67l3.500 1.500v3.500z" fill="#0000ff" shape-rendering="auto"/>
<path d="M1115 63h1v1h-1zM1116 62h1v1h-1zM1117 63h1v1h-1zM1118 62h1v1h-1zM1119 63h1v1h-1zM1120 62h1v1h-1zM1121 63h1v1h-1zM1122 62h1v1h-1zM1123 63h1v1h-1zM1115 65h1v1h-1zM1115 67h1v1h-1zM1115 69h1v1h-1zM1116 70h1v1h-1zM1118 68h1v1h-1zM1118 70h1v1h-1zM1118 72h1v1h-1zM1118 74h1v1h-1zM1120 74h1v1h-1zM1122 74h1v1h-1zM1118 66h1v1h-1zM1119 65h1v1h-1zM1120 66h1v1h-1zM1121 67h1v1h-1zM1122 66h1v1h-1zM1123 65h1v1h-1zM1124 66h1v1h-1z" fill="#000090"/>
<path d="M1125.500 65.500l4.500 4.500-4.500 4.500-4.500-4.500z" fill="#f0f0f0" stroke="#333" stroke-width="0.9" shape-rendering="auto"/>
<path d="M1125.500 66.500l3.500 3.500-3.500 3.500-3.500-3.500z" fill="#a0a0a0" mask="url(#m50)"/>
<g mask="url(#m50)">
<path d="M1127 75l2-1 3 3.500-1.500 1.500z" fill="#0000ff" />
</g>
<rect x="1175" y="66" width="1" height="14" fill="#008030"/>
<rect x="1168" y="79" width="16" height="1" fill="#008030"/>
<rect x="1197" y="64" width="8" height="16" fill="#100070"/>
<path d="M1193 78.500h5.500v-13h4v13h6" fill="none" stroke="#008030" stroke-width="1" />
<rect x="1220" y="64" width="14" height="16" fill="#004000"/>
<path d="M1219 78.500h3.500v-13h3v13h3v-13h3v13h3.500" fill="none" stroke="#008030" stroke-width="1" />
<g mask="url(#m50)">
<rect x="1254" y="64" width="16" height="16" fill="#18187c"/>
<rect x="1282" y="64" width="4" height="16" fill="#18187c"/>
</g>
<path d="M1255 78h1v1h-1zM1257 78h1v1h-1zM1259 78h1v1h-1zM1261 78h1v1h-1zM1261 66h1v1h-1zM1261 68h1v1h-1zM1261 70h1v1h-1zM1261 72h1v1h-1zM1261 74h1v1h-1zM1261 76h1v1h-1zM1262 65h1v1h-1zM1264 65h1v1h-1zM1266 65h1v1h-1zM1268 65h1v1h-1z" fill="#108030"/>
<path d="M1277 78h1v1h-1zM1279 78h1v1h-1zM1284 65h1v1h-1zM1286 65h1v1h-1zM1288 65h1v1h-1zM1290 65h1v1h-1zM1283 66h1v1h-1zM1283 68h1v1h-1zM1283 70h1v1h-1zM1283 72h1v1h-1zM1283 74h1v1h-1zM1283 76h1v1h-1zM1283 78h1v1h-1z" fill="#108030"/>
<path d="M1281 64h1v1h-1zM1281 66h1v1h-1zM1281 68h1v1h-1zM1281 70h1v1h-1zM1281 72h1v1h-1zM1281 74h1v1h-1zM1281 76h1v1h-1zM1281 78h1v1h-1z" fill="#ffff00"/>
<path d="M1299 78h1v1h-1zM1301 78h1v1h-1zM1303 78h1v1h-1zM1305 78h1v1h-1zM1306 77h1v1h-1zM1306 67h1v1h-1zM1306 69h1v1h-1zM1306 71h1v1h-1zM1306 73h1v1h-1zM1306 75h1v1h-1zM1306 65h1v1h-1zM1308 65h1v1h-1zM1310 65h1v1h-1zM1312 65h1v1h-1z" fill="#108030"/>
<path d="M1321 78h1v1h-1zM1323 78h1v1h-1zM1325 78h1v1h-1zM1328 67h1v1h-1zM1328 69h1v1h-1zM1328 71h1v1h-1zM1328 73h1v1h-1zM1328 75h1v1h-1zM1328 77h1v1h-1zM1328 65h1v1h-1zM1330 65h1v1h-1zM1332 65h1v1h-1zM1334 65h1v1h-1z" fill="#108030"/>
<path d="M1327 64h1v1h-1zM1327 66h1v1h-1zM1327 68h1v1h-1zM1327 70h1v1h-1zM1327 72h1v1h-1zM1327 74h1v1h-1zM1327 76h1v1h-1zM1327 78h1v1h-1z" fill="#ffff00"/>
<path d="M14 98.500l6-5.500 3 3-5.500 4.500z" fill="#e238ff" stroke="#6c0a80" stroke-width="1" shape-rendering="auto"/>
<rect x="23" y="98" width="7" height="8" fill="#0a8a30"/>
<rect x="23" y="99" width="6" height="6" fill="#14b446"/>
<circle cx="23.500" cy="99" r="3.300" fill="#00e8ff" stroke="#5c98c0" stroke-width=".8" shape-rendering="auto"/>
<path d="M19 99l5 5-5 5.200-5-5.200z" fill="#0050ff" shape-rendering="auto"/>
<rect x="34" y="102" width="5" height="1" fill="#000"/>
<rect x="35" y="103" width="3" height="1" fill="#000"/>
<rect x="36" y="104" width="1" height="1" fill="#000"/>
<path d="M39.4 114.80000000000001L32.0 122.4L35.5 122.4L39.4 118.5z" fill="#8cdcfc" shape-rendering="auto"/>
<path d="M39.4 114.80000000000001L47.0 122.4L43.3 122.4L39.4 118.5z" fill="#1a92d6" shape-rendering="auto"/>
<path d="M39.4 130.0L47.0 122.4L43.3 122.4L39.4 126.30000000000001z" fill="#0f6eae" shape-rendering="auto"/>
<path d="M39.4 130.0L32.0 122.4L35.5 122.4L39.4 126.30000000000001z" fill="#1c8ed0" shape-rendering="auto"/>
<path d="M39.4 118.5L43.3 122.4L39.4 126.30000000000001L35.5 122.4z" fill="#08b6f0" shape-rendering="auto"/>
<path d="M32 123.7h3.800v-2.400l3.700 4.200-3.700 4.200v-2.400h-3.800z" fill="url(#ggr)" shape-rendering="auto"/>
<rect x="34" y="122" width="2" height="1" fill="#fff"/>
<rect x="17.300" y="118.5" width="10" height="10" rx="1.500" fill="url(#gpl)" stroke="#9aa0b0" stroke-width=".6" shape-rendering="auto"/>
<rect x="20" y="123" width="5" height="1" fill="#000"/>
<rect x="22" y="121" width="1" height="5" fill="#000"/>
<rect x="27" y="123" width="5" height="1" fill="#e0e0e0"/>
<path d="M39.4 131.8L32.0 139.4L35.5 139.4L39.4 135.5z" fill="#8cdcfc" shape-rendering="auto"/>
<path d="M39.4 131.8L47.0 139.4L43.3 139.4L39.4 135.5z" fill="#1a92d6" shape-rendering="auto"/>
<path d="M39.4 147.0L47.0 139.4L43.3 139.4L39.4 143.3z" fill="#0f6eae" shape-rendering="auto"/>
<path d="M39.4 147.0L32.0 139.4L35.5 139.4L39.4 143.3z" fill="#1c8ed0" shape-rendering="auto"/>
<path d="M39.4 135.5L43.3 139.4L39.4 143.3L35.5 139.4z" fill="#08b6f0" shape-rendering="auto"/>
<path d="M32 140.7h3.800v-2.400l3.700 4.200-3.700 4.200v-2.400h-3.800z" fill="url(#ggr)" shape-rendering="auto"/>
<rect x="34" y="139" width="2" height="1" fill="#fff"/>
<path d="M39.4 148.8L32.0 156.4L35.5 156.4L39.4 152.5z" fill="#8cdcfc" shape-rendering="auto"/>
<path d="M39.4 148.8L47.0 156.4L43.3 156.4L39.4 152.5z" fill="#1a92d6" shape-rendering="auto"/>
<path d="M39.4 164.0L47.0 156.4L43.3 156.4L39.4 160.3z" fill="#0f6eae" shape-rendering="auto"/>
<path d="M39.4 164.0L32.0 156.4L35.5 156.4L39.4 160.3z" fill="#1c8ed0" shape-rendering="auto"/>
<path d="M39.4 152.5L43.3 156.4L39.4 160.3L35.5 156.4z" fill="#08b6f0" shape-rendering="auto"/>
<path d="M32 157.7h3.800v-2.400l3.700 4.200-3.700 4.200v-2.400h-3.800z" fill="url(#ggr)" shape-rendering="auto"/>
<rect x="34" y="156" width="2" height="1" fill="#fff"/>
<path d="M39.4 165.8L32.0 173.4L35.5 173.4L39.4 169.5z" fill="#8cdcfc" shape-rendering="auto"/>
<path d="M39.4 165.8L47.0 173.4L43.3 173.4L39.4 169.5z" fill="#1a92d6" shape-rendering="auto"/>
<path d="M39.4 181.0L47.0 173.4L43.3 173.4L39.4 177.3z" fill="#0f6eae" shape-rendering="auto"/>
<path d="M39.4 181.0L32.0 173.4L35.5 173.4L39.4 177.3z" fill="#1c8ed0" shape-rendering="auto"/>
<path d="M39.4 169.5L43.3 173.4L39.4 177.3L35.5 173.4z" fill="#08b6f0" shape-rendering="auto"/>
<path d="M32 174.7h3.800v-2.400l3.700 4.200-3.700 4.200v-2.400h-3.800z" fill="url(#ggr)" shape-rendering="auto"/>
<rect x="34" y="173" width="2" height="1" fill="#fff"/>
<path d="M39.4 182.8L32.0 190.4L35.5 190.4L39.4 186.5z" fill="#8cdcfc" shape-rendering="auto"/>
<path d="M39.4 182.8L47.0 190.4L43.3 190.4L39.4 186.5z" fill="#1a92d6" shape-rendering="auto"/>
<path d="M39.4 198.0L47.0 190.4L43.3 190.4L39.4 194.3z" fill="#0f6eae" shape-rendering="auto"/>
<path d="M39.4 198.0L32.0 190.4L35.5 190.4L39.4 194.3z" fill="#1c8ed0" shape-rendering="auto"/>
<path d="M39.4 186.5L43.3 190.4L39.4 194.3L35.5 190.4z" fill="#08b6f0" shape-rendering="auto"/>
<path d="M32 191.7h3.800v-2.400l3.700 4.200-3.700 4.200v-2.400h-3.800z" fill="url(#ggr)" shape-rendering="auto"/>
<rect x="34" y="190" width="2" height="1" fill="#fff"/>
<path d="M39.4 199.8L32.0 207.4L35.5 207.4L39.4 203.5z" fill="#8cdcfc" shape-rendering="auto"/>
<path d="M39.4 199.8L47.0 207.4L43.3 207.4L39.4 203.5z" fill="#1a92d6" shape-rendering="auto"/>
<path d="M39.4 215.0L47.0 207.4L43.3 207.4L39.4 211.3z" fill="#0f6eae" shape-rendering="auto"/>
<path d="M39.4 215.0L32.0 207.4L35.5 207.4L39.4 211.3z" fill="#1c8ed0" shape-rendering="auto"/>
<path d="M39.4 203.5L43.3 207.4L39.4 211.3L35.5 207.4z" fill="#08b6f0" shape-rendering="auto"/>
<path d="M40 208.7h3.800v-2.400l3.700 4.200-3.700 4.200v-2.400h-3.800z" fill="url(#ggr)" shape-rendering="auto"/>
<rect x="17.300" y="203.5" width="10" height="10" rx="1.500" fill="url(#gpl)" stroke="#9aa0b0" stroke-width=".6" shape-rendering="auto"/>
<rect x="20" y="208" width="5" height="1" fill="#000"/>
<rect x="22" y="206" width="1" height="5" fill="#000"/>
<rect x="27" y="208" width="5" height="1" fill="#e0e0e0"/>
<path d="M39.4 216.8L32.0 224.4L35.5 224.4L39.4 220.5z" fill="#8cdcfc" shape-rendering="auto"/>
<path d="M39.4 216.8L47.0 224.4L43.3 224.4L39.4 220.5z" fill="#1a92d6" shape-rendering="auto"/>
<path d="M39.4 232.0L47.0 224.4L43.3 224.4L39.4 228.3z" fill="#0f6eae" shape-rendering="auto"/>
<path d="M39.4 232.0L32.0 224.4L35.5 224.4L39.4 228.3z" fill="#1c8ed0" shape-rendering="auto"/>
<path d="M39.4 220.5L43.3 224.4L39.4 228.3L35.5 224.4z" fill="#08b6f0" shape-rendering="auto"/>
<path d="M40 225.7h3.800v-2.400l3.700 4.200-3.700 4.200v-2.400h-3.800z" fill="url(#ggr)" shape-rendering="auto"/>
<rect x="17.300" y="220.5" width="10" height="10" rx="1.500" fill="url(#gpl)" stroke="#9aa0b0" stroke-width=".6" shape-rendering="auto"/>
<rect x="20" y="225" width="5" height="1" fill="#000"/>
<rect x="22" y="223" width="1" height="5" fill="#000"/>
<rect x="27" y="225" width="5" height="1" fill="#e0e0e0"/>
<path d="M39.4 233.8L32.0 241.4L35.5 241.4L39.4 237.5z" fill="#8cdcfc" shape-rendering="auto"/>
<path d="M39.4 233.8L47.0 241.4L43.3 241.4L39.4 237.5z" fill="#1a92d6" shape-rendering="auto"/>
<path d="M39.4 249.0L47.0 241.4L43.3 241.4L39.4 245.3z" fill="#0f6eae" shape-rendering="auto"/>
<path d="M39.4 249.0L32.0 241.4L35.5 241.4L39.4 245.3z" fill="#1c8ed0" shape-rendering="auto"/>
<path d="M39.4 237.5L43.3 241.4L39.4 245.3L35.5 241.4z" fill="#08b6f0" shape-rendering="auto"/>
<path d="M40 242.7h3.800v-2.400l3.700 4.200-3.700 4.200v-2.400h-3.800z" fill="url(#ggr)" shape-rendering="auto"/>
<path d="M39.4 250.79999999999998L32.0 258.4L35.5 258.4L39.4 254.49999999999997z" fill="#8cdcfc" shape-rendering="auto"/>
<path d="M39.4 250.79999999999998L47.0 258.4L43.3 258.4L39.4 254.49999999999997z" fill="#1a92d6" shape-rendering="auto"/>
<path d="M39.4 266.0L47.0 258.4L43.3 258.4L39.4 262.29999999999995z" fill="#0f6eae" shape-rendering="auto"/>
<path d="M39.4 266.0L32.0 258.4L35.5 258.4L39.4 262.29999999999995z" fill="#1c8ed0" shape-rendering="auto"/>
<path d="M39.4 254.49999999999997L43.3 258.4L39.4 262.29999999999995L35.5 258.4z" fill="#08b6f0" shape-rendering="auto"/>
<path d="M40 259.7h3.800v-2.400l3.700 4.200-3.700 4.200v-2.400h-3.800z" fill="url(#ggr)" shape-rendering="auto"/>
<rect x="3" y="6" width="16" height="16" fill="#000"/>
<rect x="3" y="6" width="15" height="15" fill="#fff"/>
<rect x="18" y="6" width="1" height="1" fill="#c4d6ec"/>
<rect x="4" y="7" width="14" height="14" fill="#c0c0c0"/>
<rect x="5" y="8" width="12" height="2" fill="#fff"/>
<rect x="5" y="12" width="12" height="8" fill="#000"/>
<rect x="5" y="13" width="3" height="1" fill="#00a040"/>
<rect x="7" y="13" width="1" height="3" fill="#00a040"/>
<rect x="7" y="15" width="2" height="1" fill="#00a040"/>
<rect x="11" y="13" width="3" height="1" fill="#00a040"/>
<rect x="13" y="13" width="1" height="3" fill="#00a040"/>
<rect x="13" y="15" width="4" height="1" fill="#00a040"/>
<rect x="5" y="17" width="4" height="1" fill="#00a040"/>
<rect x="8" y="17" width="1" height="3" fill="#00a040"/>
<rect x="11" y="18" width="1" height="2" fill="#00a040"/>
<rect x="9" y="11" width="1" height="9" fill="#20e0e8"/>
<rect x="12" y="18" width="5" height="1" fill="#4000ff"/>
</svg>
<div class="t" style="left:22px;top:8px;color:#0e0e50;-webkit-text-stroke:.1px #0e0e50;font-size:11px;letter-spacing:0.17px">Wave - Default</div>
<div class="m" style="left:616px;top:30px;width:58px;height:19px;line-height:21px;text-align:right;color:#0a0a48;font-size:11.7px">100 ps</div>
<div class="t" style="left:727px;top:64px;color:#7a7a7a;font-size:11px;letter-spacing:0.05px">Search:</div>
<div class="t w" style="left:201px;top:95px">Msgs</div>
<div class="t w" style="left:51px;top:116px">Data</div>
<div class="t w" style="left:194px;top:116px">-54</div>
<div class="t w" style="left:51px;top:133px">Clk</div>
<div class="t w" style="left:194px;top:133px">St1</div>
<div class="t w" style="left:51px;top:150px">WrEn</div>
<div class="t w" style="left:194px;top:150px">St1</div>
<div class="t w" style="left:51px;top:167px">RdEn</div>
<div class="t w" style="left:194px;top:167px">St1</div>
<div class="t w" style="left:51px;top:184px">Reset</div>
<div class="t w" style="left:194px;top:184px">St0</div>
<div class="t w" style="left:51px;top:201px">Wnum</div>
<div class="t w" style="left:194px;top:201px">7</div>
<div class="t w" style="left:51px;top:218px">Q</div>
<div class="t w" style="left:194px;top:218px">-54</div>
<div class="t w" style="left:51px;top:235px">Empty</div>
<div class="t w" style="left:194px;top:235px">St0</div>
<div class="t w" style="left:51px;top:252px">Full</div>
<div class="t w" style="left:194px;top:252px">St0</div>
<div class="t w" style="left:243px;top:117px">-54</div>
<div class="t w" style="left:243px;top:202px">0</div>
<div class="t w" style="left:690px;top:202px">1</div>
<div class="t w" style="left:746px;top:202px">2</div>
<div class="t w" style="left:802px;top:202px">3</div>
<div class="t w" style="left:858px;top:202px">4</div>
<div class="t w" style="left:914px;top:202px">5</div>
<div class="t w" style="left:970px;top:202px">6</div>
<div class="t w" style="left:1026px;top:202px">7</div>
<div class="t w" style="left:1082px;top:202px">-8</div>
<div class="t w" style="left:1250px;top:202px">7</div>
<div class="t w" style="left:243px;top:219px">0</div>
<div class="t w" style="left:1250px;top:219px">-54</div>
</div></body></html>
